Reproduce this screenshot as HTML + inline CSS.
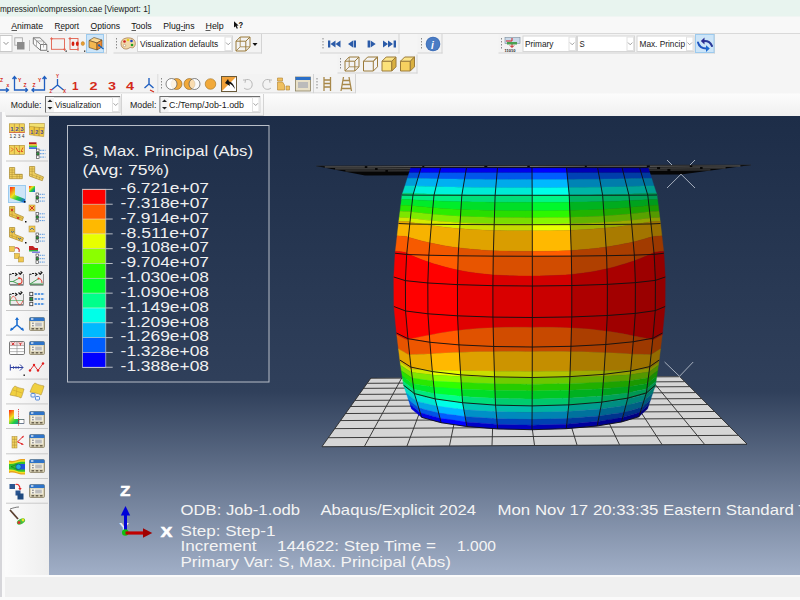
<!DOCTYPE html>
<html><head><meta charset="utf-8"><style>
html,body{margin:0;padding:0;width:800px;height:600px;overflow:hidden;background:#f4f4f4}
svg{position:absolute;left:0;top:0;display:block}
text{font-family:"Liberation Sans", sans-serif}
</style></head><body>
<svg width="800" height="600" viewBox="0 0 800 600">
<rect x="0" y="0" width="800" height="16.7" fill="#e8f4ef"/>
<text x="0" y="11.8" font-size="9.4" fill="#1a1a1a" textLength="150" lengthAdjust="spacingAndGlyphs" >mpression\compression.cae [Viewport: 1]</text>
<rect x="0" y="16.7" width="800" height="16.8" fill="#f8f8f8"/>
<text x="11.25" y="28.5" font-size="9.1" fill="#111" textLength="31.75" lengthAdjust="spacingAndGlyphs" >Animate</text>
<text x="54.5" y="28.5" font-size="9.1" fill="#111" textLength="24.5" lengthAdjust="spacingAndGlyphs" >Report</text>
<text x="90.5" y="28.5" font-size="9.1" fill="#111" textLength="29.5" lengthAdjust="spacingAndGlyphs" >Options</text>
<text x="131.25" y="28.5" font-size="9.1" fill="#111" textLength="20.5" lengthAdjust="spacingAndGlyphs" >Tools</text>
<text x="163.25" y="28.5" font-size="9.1" fill="#111" textLength="31.25" lengthAdjust="spacingAndGlyphs" >Plug-ins</text>
<text x="205.5" y="28.5" font-size="9.1" fill="#111" textLength="18.25" lengthAdjust="spacingAndGlyphs" >Help</text>
<path d="M11.5 30.5h5.5 M58.5 30.5h4 M90.5 30.5h6 M131.5 30.5h4.5 M181 30.5h4 M205.5 30.5h5" stroke="#333" stroke-width="0.8"/>
<path d="M234 21.3 L234 27.6 L235.5 26.3 L236.8 28.8 L237.9 28.3 L236.7 25.8 L238.6 25.6Z" fill="#111"/>
<text x="238.6" y="28.2" font-size="8.6" fill="#111" textLength="4.6" lengthAdjust="spacingAndGlyphs" font-weight="bold">?</text>
<rect x="0" y="33" width="800" height="1" fill="#d9d9d9"/>
<rect x="0" y="34" width="800" height="82" fill="#f5f5f5"/>
<rect x="0" y="34" width="107" height="19.5" fill="#f3f3f3"/><rect x="106" y="34" width="1" height="19.5" fill="#d4d4d4"/><rect x="0" y="52.5" width="107" height="1" fill="#d4d4d4"/>
<rect x="0" y="35.5" width="12" height="16" fill="#fff" stroke="#c8c8c8" stroke-width="1"/>
<path d="M3.5 42 L6 44.5 L8.5 42" fill="none" stroke="#777" stroke-width="0.8"/>
<rect x="14.8" y="37.8" width="7.6" height="7.4" fill="#f6f6f6" stroke="#a8a8a8" stroke-width="0.9"/>
<rect x="17" y="42" width="7.5" height="7.5" fill="#8a8a8a"/>
<rect x="29" y="40" width="1" height="11" fill="#c4c4c4"/>
<path d="M33.3 37.8 H40 L46.8 44.5 V50.3 H40.5 L33.3 44Z M33.3 37.8 L40.5 44.5 H46.8 M40.5 44.5 V50.3" fill="#fafafa" stroke="#6e6e6e" stroke-width="0.9"/>
<path d="M36.5 41 H43.5 V47.5 M36.5 41 V46" fill="none" stroke="#9a9a9a" stroke-width="0.7"/>
<rect x="47.3" y="50.8" width="1.2" height="1.2" fill="#333"/>
<rect x="51.5" y="38.8" width="13" height="10.5" fill="none" stroke="#e2604e" stroke-width="0.9"/>
<path d="M50 38.8h3 M51.5 37.3v3 M63 49.3h3 M64.5 47.8v3" stroke="#e2604e" stroke-width="0.9"/>
<rect x="65.5" y="50.5" width="1.3" height="1.3" fill="#222"/>
<rect x="70" y="38.5" width="8" height="11" fill="none" stroke="#e2604e" stroke-width="0.9"/>
<path d="M68.5 38.5h3 M70 37v3 M78 48v3" stroke="#e2604e" stroke-width="0.9"/>
<ellipse cx="73" cy="43.8" rx="1.4" ry="2.3" fill="#d42010"/><ellipse cx="77.3" cy="43.8" rx="1.4" ry="2.3" fill="#d42010"/><ellipse cx="82.8" cy="43.6" rx="1.7" ry="2" fill="#e8a030" stroke="#b07020" stroke-width="0.4"/>
<rect x="84" y="50.5" width="1.3" height="1.3" fill="#222"/>
<rect x="86.5" y="34.5" width="17" height="18" fill="#cde5f8" stroke="#9ccaee" stroke-width="1"/>
<path d="M89 40.5 l5 -3 l8 2.5 l-5 3Z" fill="#fbd890" stroke="#5a4020" stroke-width="0.6"/><path d="M89 40.5 l8 2.5 v7 l-8 -2.5Z" fill="#f4b850" stroke="#5a4020" stroke-width="0.6"/><path d="M97 43 l5 -3 v7 l-5 3Z" fill="#f08a30" stroke="#5a4020" stroke-width="0.6"/>
<path d="M99 45.5 L103.5 49" stroke="#1060c0" stroke-width="1.2"/><circle cx="99" cy="45.3" r="1.1" fill="#1060c0"/>
<rect x="113.5" y="34" width="148.5" height="19.5" fill="#f3f3f3"/><rect x="261" y="34" width="1" height="19.5" fill="#d4d4d4"/><rect x="113.5" y="52.5" width="148.5" height="1" fill="#d4d4d4"/>
<rect x="116" y="38" width="1" height="1.5" fill="#8a8a8a"/><rect x="116" y="41" width="1" height="1.5" fill="#8a8a8a"/><rect x="116" y="44" width="1" height="1.5" fill="#8a8a8a"/><rect x="116" y="47" width="1" height="1.5" fill="#8a8a8a"/>
<path d="M121 43.5 C121 38 128 37 132 38.5 C136 40 136 45 134 47 C132 49 131 46.5 129 48 C127 50 121 49.5 121 43.5Z" fill="#f0d8a8" stroke="#a07040" stroke-width="0.7"/>
<circle cx="124.5" cy="41.5" r="1.3" fill="#d02020"/><circle cx="128" cy="40" r="1.3" fill="#e8d020"/><circle cx="131.5" cy="41" r="1.3" fill="#2040c0"/><circle cx="132" cy="45" r="1.3" fill="#20a020"/><circle cx="124.5" cy="45.5" r="1.2" fill="#fff" stroke="#a07040" stroke-width="0.5"/>
<rect x="137.5" y="36.0" width="95" height="15.5" fill="#fff" stroke="#d6d6d6" stroke-width="1"/><rect x="225" y="37.0" width="6.5" height="13.5" fill="#fff" stroke="#e2e2e2" stroke-width="1"/><path d="M226 42.55 L228.2 44.75 L230.4 42.55" fill="none" stroke="#8a8a8a" stroke-width="0.8"/><text x="140" y="47.2" font-size="9.2" fill="#1a1a1a" textLength="78.2" lengthAdjust="spacingAndGlyphs" >Visualization defaults</text>
<path d="M236 41.2 h9.8 v9.8 h-9.8Z M236 41.2 l4.2 -4.2 h9.8 l-4.2 4.2 M245.8 41.2 l4.2 -4.2 v9.8 l-4.2 4.2" fill="none" stroke="#9a7a3a" stroke-width="1"/><path d="M240.2 37 v9.8 l-4.2 4.2 M240.2 46.8 h9.8" fill="none" stroke="#9a7a3a" stroke-width="0.8"/>
<path d="M252.5 43 h5 l-2.5 3Z" fill="#111"/>
<rect x="320" y="34" width="79.5" height="19.5" fill="#f3f3f3"/><rect x="398.5" y="34" width="1" height="19.5" fill="#d4d4d4"/><rect x="320" y="52.5" width="79.5" height="1" fill="#d4d4d4"/>
<rect x="322.5" y="38" width="1" height="1.5" fill="#8a8a8a"/><rect x="322.5" y="41" width="1" height="1.5" fill="#8a8a8a"/><rect x="322.5" y="44" width="1" height="1.5" fill="#8a8a8a"/><rect x="322.5" y="47" width="1" height="1.5" fill="#8a8a8a"/>
<path d="M328 40.5 h2.3 v7 h-2.3Z M335.5 40.5 v7 l-5 -3.5Z M340.5 40.5 v7 l-5 -3.5Z" fill="#2b5ba8"/>
<path d="M353 40.5 v7 l-5 -3.5Z M353.6 40.5 h2.4 v7 h-2.4Z" fill="#2b5ba8"/>
<path d="M367.6 40.5 h2.4 v7 h-2.4Z M370.6 40.5 v7 l5.1 -3.5Z" fill="#2b5ba8"/>
<path d="M383 40.5 v7 l5 -3.5Z M388 40.5 v7 l5 -3.5Z M393.6 40.5 h2.4 v7 h-2.4Z" fill="#2b5ba8"/>
<rect x="417.5" y="34" width="25.0" height="19.5" fill="#f3f3f3"/><rect x="441.5" y="34" width="1" height="19.5" fill="#d4d4d4"/><rect x="417.5" y="52.5" width="25.0" height="1" fill="#d4d4d4"/>
<rect x="421" y="38" width="1" height="1.5" fill="#8a8a8a"/><rect x="421" y="41" width="1" height="1.5" fill="#8a8a8a"/><rect x="421" y="44" width="1" height="1.5" fill="#8a8a8a"/><rect x="421" y="47" width="1" height="1.5" fill="#8a8a8a"/>
<circle cx="433" cy="44" r="7.3" fill="#3f6fb8"/><circle cx="433" cy="44" r="6.5" fill="#4a7cc4"/>
<text x="431" y="48.5" font-size="10" fill="#fff" font-weight="bold" font-style="italic" font-family='Liberation Serif'>i</text>
<rect x="498.5" y="34" width="216.5" height="19.5" fill="#f3f3f3"/><rect x="714" y="34" width="1" height="19.5" fill="#d4d4d4"/><rect x="498.5" y="52.5" width="216.5" height="1" fill="#d4d4d4"/>
<rect x="501" y="38" width="1" height="1.5" fill="#8a8a8a"/><rect x="501" y="41" width="1" height="1.5" fill="#8a8a8a"/><rect x="501" y="44" width="1" height="1.5" fill="#8a8a8a"/><rect x="501" y="47" width="1" height="1.5" fill="#8a8a8a"/>
<rect x="505" y="37.5" width="15" height="6" fill="#c8d8e8" stroke="#7a8a9a" stroke-width="0.6"/><path d="M506 41 h6 v-3" stroke="#d02020" stroke-width="1" fill="none"/><path d="M512 42 v5 M510 45.5 l2 2 l2 -2" stroke="#c01010" stroke-width="1" fill="none"/><rect x="507" y="42" width="10" height="2.5" fill="#4aa050"/>
<text x="504.5" y="52.3" font-size="4" fill="#222" font-weight="bold">11010</text>
<rect x="523.0" y="36.0" width="53.5" height="15.5" fill="#fff" stroke="#d6d6d6" stroke-width="1"/><rect x="569" y="37.0" width="6.5" height="13.5" fill="#fff" stroke="#e2e2e2" stroke-width="1"/><path d="M570 42.55 L572.2 44.75 L574.4 42.55" fill="none" stroke="#8a8a8a" stroke-width="0.8"/><text x="525.0" y="47.2" font-size="9.2" fill="#1a1a1a" textLength="28.5" lengthAdjust="spacingAndGlyphs" >Primary</text>
<rect x="577.5" y="36.0" width="57" height="15.5" fill="#fff" stroke="#d6d6d6" stroke-width="1"/><rect x="627" y="37.0" width="6.5" height="13.5" fill="#fff" stroke="#e2e2e2" stroke-width="1"/><path d="M628 42.55 L630.2 44.75 L632.4 42.55" fill="none" stroke="#8a8a8a" stroke-width="0.8"/><text x="579.5" y="47.2" font-size="9.2" fill="#1a1a1a" textLength="5.2" lengthAdjust="spacingAndGlyphs" >S</text>
<rect x="637.0" y="36.0" width="57.0" height="15.5" fill="#fff" stroke="#d6d6d6" stroke-width="1"/><rect x="686.5" y="37.0" width="6.5" height="13.5" fill="#fff" stroke="#e2e2e2" stroke-width="1"/><path d="M687.5 42.55 L689.7 44.75 L691.9 42.55" fill="none" stroke="#8a8a8a" stroke-width="0.8"/><text x="639.5" y="47.2" font-size="9.2" fill="#1a1a1a" textLength="45.5" lengthAdjust="spacingAndGlyphs" >Max. Princip</text>
<rect x="695.5" y="34.5" width="18.5" height="18" fill="#cde5f8" stroke="#9ccaee" stroke-width="1"/>
<path d="M703.5 41.2 Q709.5 40.5 712 46" stroke="#2a3a9a" stroke-width="2" fill="none" stroke-linecap="round"/>
<path d="M700.8 41 L704.5 37.6 L704.5 44.4Z" fill="#2a2a90"/>
<path d="M698 42.5 Q699.5 48.3 706.5 48.6" stroke="#1f55c0" stroke-width="2" fill="none" stroke-linecap="round"/>
<path d="M709.8 48.6 L706 45.3 L706 51.9Z" fill="#1a68d0"/>
<rect x="337.5" y="54.5" width="80.0" height="19.0" fill="#f3f3f3"/><rect x="416.5" y="54.5" width="1" height="19.0" fill="#d4d4d4"/><rect x="337.5" y="72.5" width="80.0" height="1" fill="#d4d4d4"/>
<rect x="340" y="58" width="1" height="1.5" fill="#8a8a8a"/><rect x="340" y="61" width="1" height="1.5" fill="#8a8a8a"/><rect x="340" y="64" width="1" height="1.5" fill="#8a8a8a"/><rect x="340" y="67" width="1" height="1.5" fill="#8a8a8a"/>
<path d="M345 61.2 h9.8 v9.8 h-9.8Z M345 61.2 l4.2 -4.2 h9.8 l-4.2 4.2 M354.8 61.2 l4.2 -4.2 v9.8 l-4.2 4.2" fill="none" stroke="#9a7a3a" stroke-width="1"/><path d="M349.2 57 v9.8 l-4.2 4.2 M349.2 66.8 h9.8" fill="none" stroke="#9a7a3a" stroke-width="0.8"/>
<path d="M363.5 61.2 h9.8 v9.8 h-9.8Z M363.5 61.2 l4.2 -4.2 h9.8 l-4.2 4.2 M373.3 61.2 l4.2 -4.2 v9.8 l-4.2 4.2" fill="none" stroke="#9a7a3a" stroke-width="1"/>
<path d="M382 61.2 h9.8 v9.8 h-9.8Z" fill="#fbe27a" stroke="#9a7a3a" stroke-width="1"/><path d="M382 61.2 l4.2 -4.2 h9.8 l-4.2 4.2Z" fill="#fbe48a" stroke="#9a7a3a" stroke-width="1"/><path d="M391.8 61.2 l4.2 -4.2 v9.8 l-4.2 4.2Z" fill="#d9b040" stroke="#9a7a3a" stroke-width="1"/>
<path d="M400.5 61.2 h9.8 v9.8 h-9.8Z" fill="#f6d060" stroke="#9a7a3a" stroke-width="1"/><path d="M400.5 61.2 l4.2 -4.2 h9.8 l-4.2 4.2Z" fill="#fbe48a" stroke="#9a7a3a" stroke-width="1"/><path d="M410.3 61.2 l4.2 -4.2 v9.8 l-4.2 4.2Z" fill="#d9b040" stroke="#9a7a3a" stroke-width="1"/>
<rect x="0" y="74" width="158.5" height="19.5" fill="#f3f3f3"/><rect x="157.5" y="74" width="1" height="19.5" fill="#d4d4d4"/><rect x="0" y="92.5" width="158.5" height="1" fill="#d4d4d4"/>
<path d="M-1 90 h9 M6 88 l2.5 2 l-2.5 2" stroke="#1f5fc0" stroke-width="1.3" fill="none"/>
<text x="0" y="81.5" font-size="5" fill="#d42a1a" font-weight="bold">Z</text>
<text x="6.5" y="86.5" font-size="5" fill="#d42a1a" font-weight="bold">x</text>
<path d="M14.5 77 v13 h13 M12.5 79 l2 -2.5 l2 2.5 M25.5 88 l2 2 l-2 2" stroke="#1f5fc0" stroke-width="1.3" fill="none"/>
<text x="18" y="81.5" font-size="5" fill="#d42a1a" font-weight="bold">Y</text>
<text x="23.5" y="87" font-size="5" fill="#d42a1a" font-weight="bold">Z</text>
<path d="M44.5 77 v13 h-13 M42.5 79 l2 -2.5 l2 2.5 M34 88 l-2 2 l2 2" stroke="#1f5fc0" stroke-width="1.3" fill="none"/>
<text x="38" y="81.5" font-size="5" fill="#d42a1a" font-weight="bold">Y</text>
<text x="32.5" y="87" font-size="5" fill="#d42a1a" font-weight="bold">Z</text>
<path d="M57.5 79 v6 l-6 5 M57.5 85 l6 5" stroke="#1f5fc0" stroke-width="1.3" fill="none"/>
<text x="56" y="78" font-size="4.5" fill="#d42a1a" font-weight="bold">Y</text>
<text x="49.5" y="92.5" font-size="4.5" fill="#d42a1a" font-weight="bold">Z</text>
<text x="63" y="92.5" font-size="4.5" fill="#d42a1a" font-weight="bold">X</text>
<text x="72" y="89.5" font-size="11" fill="#d42a1a" textLength="6.5" lengthAdjust="spacingAndGlyphs" font-weight="bold">1</text>
<text x="89.5" y="89.5" font-size="11" fill="#d42a1a" textLength="8" lengthAdjust="spacingAndGlyphs" font-weight="bold">2</text>
<text x="108" y="89.5" font-size="11" fill="#d42a1a" textLength="8" lengthAdjust="spacingAndGlyphs" font-weight="bold">3</text>
<text x="126" y="89.5" font-size="11" fill="#d42a1a" textLength="8" lengthAdjust="spacingAndGlyphs" font-weight="bold">4</text>
<path d="M149 78 v6 l-4.5 4 M149 84 l4.5 4" stroke="#1f5fc0" stroke-width="1.4" fill="none"/>
<path d="M150 90 l4 2" stroke="#d42a1a" stroke-width="1.2"/>
<rect x="158.5" y="74" width="155.5" height="19.5" fill="#f3f3f3"/><rect x="313" y="74" width="1" height="19.5" fill="#d4d4d4"/><rect x="158.5" y="92.5" width="155.5" height="1" fill="#d4d4d4"/>
<rect x="161" y="78" width="1" height="1.5" fill="#8a8a8a"/><rect x="161" y="81" width="1" height="1.5" fill="#8a8a8a"/><rect x="161" y="84" width="1" height="1.5" fill="#8a8a8a"/><rect x="161" y="87" width="1" height="1.5" fill="#8a8a8a"/>
<circle cx="176.5" cy="84" r="5.5" fill="#f1a93a" stroke="#8a6020" stroke-width="0.6"/><circle cx="171.5" cy="84" r="5.5" fill="#fff" fill-opacity="0.85" stroke="#555" stroke-width="0.7"/>
<circle cx="189.5" cy="84" r="5.5" fill="#f1a93a" stroke="#8a6020" stroke-width="0.6"/><circle cx="194.5" cy="84" r="5.5" fill="#fff" fill-opacity="0.6" stroke="#555" stroke-width="0.7"/>
<circle cx="210.5" cy="84" r="5.3" fill="#f1a93a" stroke="#a07020" stroke-width="0.6"/>
<rect x="221.5" y="76.5" width="15" height="15" fill="#fff" stroke="#6a5a3a" stroke-width="1"/><path d="M222 77 h14 L222 91Z" fill="#f0a038"/>
<path d="M225 83 l3 -4 l1 2.5 C232 82 234 85 235 89 C233 86 231 84 229.5 83.5 l0.5 2.5Z" fill="#111"/>
<path d="M245 80 C250 78 253 82 252 86 C251 90 246 90 244 88 M243 80 l2.5 0 l-0.5 2.8" stroke="#b8b8b8" stroke-width="1" fill="none"/>
<path d="M270 80 C265 78 262 82 263 86 C264 90 269 90 271 88 M272 80 l-2.5 0 l0.5 2.8" stroke="#b8b8b8" stroke-width="1" fill="none"/>
<path d="M277.5 78 h5 v3 h-5Z M277.5 82 h5 l2 3 v5 h-7Z M286 86 h3.5 v4 h-3.5Z" fill="#f0c060" stroke="#b08030" stroke-width="0.6"/>
<rect x="295.5" y="77" width="15" height="14" fill="#e8e0c8" stroke="#8a8060" stroke-width="0.8"/><rect x="295.5" y="77" width="15" height="3" fill="#2a6fc8"/><rect x="298" y="82" width="10" height="6" fill="#bbb"/>
<rect x="314" y="74" width="42" height="19.5" fill="#f3f3f3"/><rect x="355" y="74" width="1" height="19.5" fill="#d4d4d4"/><rect x="314" y="92.5" width="42" height="1" fill="#d4d4d4"/>
<rect x="316.5" y="78" width="1" height="1.5" fill="#8a8a8a"/><rect x="316.5" y="81" width="1" height="1.5" fill="#8a8a8a"/><rect x="316.5" y="84" width="1" height="1.5" fill="#8a8a8a"/><rect x="316.5" y="87" width="1" height="1.5" fill="#8a8a8a"/>
<path d="M324 77 v14 M330.5 77 v14 M324 80 h6.5 M324 83.5 h6.5 M324 87 h6.5" stroke="#a8884a" stroke-width="1.3" fill="none"/>
<path d="M343.5 77 L341 91 M349 77 L351.5 91 M342.8 80.5 h6.5 M342 84.5 h8.5 M341.5 88.5 h9.5" stroke="#a8884a" stroke-width="1.3" fill="none"/>
<defs><linearGradient id="modbg" x1="0" y1="0" x2="0" y2="1"><stop offset="0" stop-color="#fcfcfc"/><stop offset="1" stop-color="#f0f0f0"/></linearGradient></defs>
<rect x="0" y="93.5" width="800" height="22.5" fill="url(#modbg)"/>
<rect x="6" y="94" width="116" height="22" fill="url(#modbg)"/><rect x="121" y="94" width="1" height="22" fill="#d4d4d4"/><rect x="6" y="115" width="116" height="1" fill="#d4d4d4"/>
<text x="10.8" y="108" font-size="8.8" fill="#1a1a1a" textLength="30.7" lengthAdjust="spacingAndGlyphs" >Module:</text>
<rect x="45.5" y="96.5" width="74.5" height="16" fill="#fff" stroke="#d4d4d4" stroke-width="1"/><path d="M45.6 112.5 V96.6 H120.0" fill="none" stroke="#6e6e6e" stroke-width="1.2"/><rect x="46" y="97" width="8" height="15" fill="#f4f4f4"/><path d="M47.5 102 L50 99.5 L52.5 102Z" fill="#222"/><path d="M47.5 107 L50 109.5 L52.5 107Z" fill="#222"/><rect x="112.5" y="97.5" width="6.5" height="14" fill="#fff" stroke="#e2e2e2" stroke-width="1"/><path d="M113.5 103.3 L115.7 105.5 L117.9 103.3" fill="none" stroke="#8a8a8a" stroke-width="0.8"/><text x="55" y="108.2" font-size="9.2" fill="#1a1a1a" textLength="46" lengthAdjust="spacingAndGlyphs" >Visualization</text>
<rect x="122" y="94" width="142" height="22" fill="url(#modbg)"/><rect x="263" y="94" width="1" height="22" fill="#d4d4d4"/><rect x="122" y="115" width="142" height="1" fill="#d4d4d4"/>
<text x="130" y="108" font-size="8.8" fill="#1a1a1a" textLength="26.4" lengthAdjust="spacingAndGlyphs" >Model:</text>
<rect x="160.0" y="96.5" width="100.0" height="16" fill="#fff" stroke="#d4d4d4" stroke-width="1"/><path d="M160.1 112.5 V96.6 H260.0" fill="none" stroke="#6e6e6e" stroke-width="1.2"/><rect x="160.5" y="97" width="8" height="15" fill="#f4f4f4"/><path d="M162.0 102 L164.5 99.5 L167.0 102Z" fill="#222"/><path d="M162.0 107 L164.5 109.5 L167.0 107Z" fill="#222"/><rect x="252.5" y="97.5" width="6.5" height="14" fill="#fff" stroke="#e2e2e2" stroke-width="1"/><path d="M253.5 103.3 L255.7 105.5 L257.9 103.3" fill="none" stroke="#8a8a8a" stroke-width="0.8"/><text x="169" y="108.2" font-size="9.2" fill="#1a1a1a" textLength="75" lengthAdjust="spacingAndGlyphs" >C:/Temp/Job-1.odb</text>
<defs><linearGradient id="ltbg" x1="0" y1="0" x2="1" y2="0"><stop offset="0" stop-color="#fdfdfd"/><stop offset="1" stop-color="#eeeeee"/></linearGradient></defs>
<rect x="0" y="116" width="49" height="459" fill="url(#ltbg)"/>
<rect x="0" y="112" width="2" height="488" fill="#d6d6da"/>
<rect x="2" y="112" width="3" height="488" fill="#fafafa"/>
<rect x="6" y="116" width="42" height="1" fill="#c8c8c8"/>
<rect x="6" y="160.5" width="42" height="1" fill="#c9c9c9"/>
<rect x="6" y="265" width="42" height="1" fill="#c9c9c9"/>
<rect x="6" y="310" width="42" height="1" fill="#c9c9c9"/>
<rect x="6" y="334.6" width="42" height="1" fill="#c9c9c9"/>
<rect x="6" y="378.6" width="42" height="1" fill="#c9c9c9"/>
<rect x="6" y="403.4" width="42" height="1" fill="#c9c9c9"/>
<rect x="6" y="428" width="42" height="1" fill="#c9c9c9"/>
<rect x="6" y="453.3" width="42" height="1" fill="#c9c9c9"/>
<rect x="6" y="478" width="42" height="1" fill="#c9c9c9"/>
<rect x="6" y="502.7" width="42" height="1" fill="#c9c9c9"/>
<rect x="9.3" y="123.8" width="15.2" height="8.5" fill="#f2d45a" stroke="#a88830" stroke-width="0.6"/>
<path d="M14.4 123.8 v8.5 M19.4 123.8 v8.5" stroke="#a88830" stroke-width="0.6"/>
<text x="10.2" y="130.8" font-size="6.2" fill="#4a4a9a" font-weight="bold">1</text>
<text x="15.2" y="130.8" font-size="6.2" fill="#4a4a9a" font-weight="bold">2</text>
<text x="20.2" y="130.8" font-size="6.2" fill="#4a4a9a" font-weight="bold">3</text>
<path d="M9 132.4 h16" stroke="#e04030" stroke-width="0.6"/>
<text x="9.5" y="138" font-size="4.6" fill="#333" textLength="15" lengthAdjust="spacingAndGlyphs">1 2 3 4</text>
<rect x="29.3" y="123.3" width="15" height="4.5" fill="#f2e070" stroke="#a88830" stroke-width="0.5"/>
<path d="M29.5 126.5 l4.8 0.3 l-0.3 8.5 l-4.5 -0.5Z M34.3 127 l5 0.4 l-0.4 8.6 l-4.6 -0.4Z M39.3 127.5 l5 0.4 l-0.6 8.7 l-4.6 -0.5Z" fill="#f0c840" stroke="#a88830" stroke-width="0.5"/>
<text x="30.2" y="133.5" font-size="5.5" fill="#4a4a9a" font-weight="bold">1</text>
<text x="35.2" y="133.5" font-size="5.5" fill="#4a4a9a" font-weight="bold">2</text>
<text x="40.2" y="133.5" font-size="5.5" fill="#4a4a9a" font-weight="bold">3</text>
<rect x="9.3" y="145.3" width="15.2" height="9" fill="#f2d45a" stroke="#a88830" stroke-width="0.6"/>
<path d="M14.4 145.3 v9 M19.4 145.3 v9" stroke="#a88830" stroke-width="0.6"/>
<path d="M11 147.5 l2 2 l-2 2 M16 147.5 l2 4 h2 M23 147.5 l-2 4 h2" stroke="#e05020" stroke-width="0.9" fill="none"/>
<path d="M29 142.3 h7.5 v1.8 h-7.5Z" fill="#b02020"/><path d="M29 144.1 h8 v1.6 h-8Z" fill="#f0b020"/><path d="M29 145.7 h8 v1.6 h-8Z" fill="#50d030"/><path d="M29 147.3 h8 v1.6 h-8Z" fill="#3060e0"/>
<rect x="36.5" y="149.00" width="2.6" height="2.6" fill="#fff" stroke="#333" stroke-width="0.6"/><path d="M40 150.30 h5.5" stroke="#4a90e0" stroke-width="0.9" stroke-dasharray="1.6 0.8"/><rect x="36.5" y="152.40" width="2.6" height="2.6" fill="#2a9a3a" stroke="#333" stroke-width="0.6"/><path d="M40 153.70 h5.5" stroke="#4a90e0" stroke-width="0.9" stroke-dasharray="1.6 0.8"/><rect x="36.5" y="155.80" width="2.6" height="2.6" fill="#fff" stroke="#333" stroke-width="0.6"/><path d="M40 157.10 h5.5" stroke="#4a90e0" stroke-width="0.9" stroke-dasharray="1.6 0.8"/>
<path d="M9.5 167.5 h5.2 v6.8 h7.6 v4.4 h-12.8Z" fill="#f0d060" stroke="#a88830" stroke-width="0.7"/><path d="M12.1 167.5 v11.2 M9.5 170 h5.2 M9.5 172.3 h5.2 M9.5 174.5 h12.8 M9.5 176.6 h12.8 M17 174.3 v4.4 M19.6 174.3 v4.4" stroke="#a88830" stroke-width="0.45"/>
<path d="M29.5 166.5 h5.2 v6.8 l8.8 3.6 l-1.2 3.8 l-12.8 -4.6Z" fill="#f0d060" stroke="#a88830" stroke-width="0.7"/><path d="M32.1 166.5 v10.5 M29.5 169 h5.2 M29.5 171.3 h5.2 M29.5 174 l13.5 4.6 M37 175 l-1 3.8 M40 176.3 l-1 3.8" stroke="#a88830" stroke-width="0.45"/>
<rect x="8.5" y="185.5" width="17" height="17" fill="#cde5f8" stroke="#9ccaee" stroke-width="1"/>
<defs><linearGradient id="rb1" x1="0" y1="0" x2="1" y2="1"><stop offset="0" stop-color="#ff2010"/><stop offset="0.35" stop-color="#f0e020"/><stop offset="0.6" stop-color="#20d040"/><stop offset="1" stop-color="#2050ff"/></linearGradient></defs><path d="M10 187 h5 v8 l10 4 v4 l-15 -5Z" fill="url(#rb1)"/>
<rect x="24" y="201" width="1.5" height="1.5" fill="#111"/>
<defs><linearGradient id="rb2" x1="0" y1="0" x2="1" y2="1"><stop offset="0" stop-color="#ff2010"/><stop offset="0.35" stop-color="#f0e020"/><stop offset="0.6" stop-color="#20d040"/><stop offset="1" stop-color="#2050ff"/></linearGradient></defs><path d="M29 186 h6 v6 h-6Z" fill="url(#rb2)"/>
<rect x="36.0" y="193.00" width="2.6" height="2.6" fill="#fff" stroke="#333" stroke-width="0.6"/><path d="M39.5 194.30 h5.5" stroke="#4a90e0" stroke-width="0.9" stroke-dasharray="1.6 0.8"/><rect x="36.0" y="196.40" width="2.6" height="2.6" fill="#2a9a3a" stroke="#333" stroke-width="0.6"/><path d="M39.5 197.70 h5.5" stroke="#4a90e0" stroke-width="0.9" stroke-dasharray="1.6 0.8"/><rect x="36.0" y="199.80" width="2.6" height="2.6" fill="#fff" stroke="#333" stroke-width="0.6"/><path d="M39.5 201.10 h5.5" stroke="#4a90e0" stroke-width="0.9" stroke-dasharray="1.6 0.8"/>
<path d="M9.5 206.5 h5.2 v6.8 l8.8 3.6 l-1.2 3.8 l-12.8 -4.6Z" fill="#f0c850" stroke="#a88830" stroke-width="0.7"/><path d="M12.1 206.5 v10.5 M9.5 209 h5.2 M9.5 211.3 h5.2 M9.5 214 l13.5 4.6 M17 215 l-1 3.8 M20 216.3 l-1 3.8" stroke="#a88830" stroke-width="0.45"/>
<path d="M11 209 l2 2 M13 209 l-2 2 M17 217 l2 2 M19 217 l-2 2" stroke="#d02020" stroke-width="0.8"/>
<rect x="25" y="221" width="1.5" height="1.5" fill="#111"/>
<rect x="29" y="205" width="6" height="6" fill="#f0c850" stroke="#a88830" stroke-width="0.5"/><path d="M30 206 l4 4 M34 206 l-4 4" stroke="#d02020" stroke-width="0.9"/>
<rect x="36.0" y="212.50" width="2.6" height="2.6" fill="#fff" stroke="#333" stroke-width="0.6"/><path d="M39.5 213.80 h5.5" stroke="#4a90e0" stroke-width="0.9" stroke-dasharray="1.6 0.8"/><rect x="36.0" y="215.90" width="2.6" height="2.6" fill="#2a9a3a" stroke="#333" stroke-width="0.6"/><path d="M39.5 217.20 h5.5" stroke="#4a90e0" stroke-width="0.9" stroke-dasharray="1.6 0.8"/><rect x="36.0" y="219.30" width="2.6" height="2.6" fill="#fff" stroke="#333" stroke-width="0.6"/><path d="M39.5 220.60 h5.5" stroke="#4a90e0" stroke-width="0.9" stroke-dasharray="1.6 0.8"/>
<path d="M9.5 227.5 h5.2 v6.8 l8.8 3.6 l-1.2 3.8 l-12.8 -4.6Z" fill="#f0c850" stroke="#a88830" stroke-width="0.7"/><path d="M12.1 227.5 v10.5 M9.5 230 h5.2 M9.5 232.3 h5.2 M9.5 235 l13.5 4.6 M17 236 l-1 3.8 M20 237.3 l-1 3.8" stroke="#a88830" stroke-width="0.45"/>
<path d="M11 231 l1.5 1.5 l1.5 -1.5 M18 238 l1.5 1.5 l1.5 -1.5" stroke="#2060c0" stroke-width="0.8" fill="none"/>
<rect x="25" y="242" width="1.5" height="1.5" fill="#111"/>
<rect x="29" y="226" width="6" height="6" fill="#f0c850" stroke="#a88830" stroke-width="0.5"/><path d="M30 230 l2 -2 l2 2" stroke="#2060c0" stroke-width="0.8" fill="none"/>
<rect x="36.0" y="233.00" width="2.6" height="2.6" fill="#fff" stroke="#333" stroke-width="0.6"/><path d="M39.5 234.30 h5.5" stroke="#4a90e0" stroke-width="0.9" stroke-dasharray="1.6 0.8"/><rect x="36.0" y="236.40" width="2.6" height="2.6" fill="#2a9a3a" stroke="#333" stroke-width="0.6"/><path d="M39.5 237.70 h5.5" stroke="#4a90e0" stroke-width="0.9" stroke-dasharray="1.6 0.8"/><rect x="36.0" y="239.80" width="2.6" height="2.6" fill="#fff" stroke="#333" stroke-width="0.6"/><path d="M39.5 241.10 h5.5" stroke="#4a90e0" stroke-width="0.9" stroke-dasharray="1.6 0.8"/>
<rect x="9.5" y="246.5" width="5" height="5" fill="#f0c850" stroke="#a88830" stroke-width="0.5"/><rect x="14.5" y="253.5" width="5" height="5" fill="#f0c850" stroke="#a88830" stroke-width="0.5"/><rect x="18.5" y="257" width="5" height="5" fill="#f0c850" stroke="#a88830" stroke-width="0.5"/>
<path d="M15 248 C18 247 20 249 19 252" stroke="#d02020" stroke-width="1.1" fill="none"/>
<path d="M29 246 h4 l2 2 h3 v2 h-9Z" fill="#c02020"/><path d="M29 250 h9 v1.5 h-9Z" fill="#30b040"/><path d="M32 251.5 h8 v1.5 h-8Z" fill="#8080e0"/>
<rect x="36.0" y="254.00" width="2.6" height="2.6" fill="#fff" stroke="#333" stroke-width="0.6"/><path d="M39.5 255.30 h5.5" stroke="#4a90e0" stroke-width="0.9" stroke-dasharray="1.6 0.8"/><rect x="36.0" y="257.40" width="2.6" height="2.6" fill="#2a9a3a" stroke="#333" stroke-width="0.6"/><path d="M39.5 258.70 h5.5" stroke="#4a90e0" stroke-width="0.9" stroke-dasharray="1.6 0.8"/><rect x="36.0" y="260.80" width="2.6" height="2.6" fill="#fff" stroke="#333" stroke-width="0.6"/><path d="M39.5 262.10 h5.5" stroke="#4a90e0" stroke-width="0.9" stroke-dasharray="1.6 0.8"/>
<path d="M9.5 274 V284.5 H23.5 V274" fill="#ececec" stroke="#8a8a8a" stroke-width="0.9"/><path d="M10 285.2 H23.5" stroke="#555" stroke-width="0.8"/><path d="M9.5 274.2 h2 M12 273.5 h2.2 M15.2 273 l1.8 1.5 l-1.8 1.2 M18.5 272.5 l2 2 M20.5 271.5 l1.5 1 l-2 2" stroke="#1a1a1a" stroke-width="1.1" fill="none"/>
<path d="M29.5 274 V284.5 H43.5 V274" fill="#ececec" stroke="#8a8a8a" stroke-width="0.9"/><path d="M30 285.2 H43.5" stroke="#555" stroke-width="0.8"/><path d="M29.5 274.2 h2 M32 273.5 h2.2 M35.2 273 l1.8 1.5 l-1.8 1.2 M38.5 272.5 l2 2 M40.5 271.5 l1.5 1 l-2 2" stroke="#1a1a1a" stroke-width="1.1" fill="none"/>
<path d="M10 281.5 H13 L18.5 278.5 M13 281.5 L18.5 284" stroke="#3a9a4a" stroke-width="0.9" fill="none"/>
<path d="M19 278 C23 277.5 23 284.5 19 284" stroke="#e04030" stroke-width="1.1" fill="none"/><circle cx="19" cy="278.2" r="1" fill="#e04030"/><circle cx="19" cy="284" r="1" fill="#e04030"/>
<path d="M30 284 L38 279 M30 284 H43" stroke="#3a9a4a" stroke-width="0.9" fill="none"/><path d="M38 279 C40 278 42 280 42 283" stroke="#e04030" stroke-width="1" fill="none"/><circle cx="38.5" cy="278.6" r="1" fill="#e04030"/>
<path d="M9.5 294 V304.5 H23.5 V294" fill="#ececec" stroke="#8a8a8a" stroke-width="0.9"/><path d="M10 305.2 H23.5" stroke="#555" stroke-width="0.8"/><path d="M9.5 294.2 h2 M12 293.5 h2.2 M15.2 293 l1.8 1.5 l-1.8 1.2 M18.5 292.5 l2 2 M20.5 291.5 l1.5 1 l-2 2" stroke="#1a1a1a" stroke-width="1.1" fill="none"/>
<path d="M10 300.5 C12.5 295 14.5 295 16.5 300.5 C18.5 306 21 306 23 300.5" stroke="#e05040" stroke-width="0.9" fill="none"/><path d="M10 300.5 h13 M10.5 296 v9" stroke="#40a050" stroke-width="0.6"/>
<rect x="29.8" y="292.3" width="3" height="3.4" fill="#fff" stroke="#333" stroke-width="0.8"/>
<path d="M34.5 294 h10" stroke="#2a7ee0" stroke-width="1.3" stroke-dasharray="2.4 0.9"/>
<rect x="29.8" y="297.3" width="3" height="3.4" fill="#2a9a3a" stroke="#333" stroke-width="0.8"/>
<path d="M34.5 299 h10" stroke="#2a7ee0" stroke-width="1.3" stroke-dasharray="2.4 0.9"/>
<rect x="29.8" y="302.3" width="3" height="3.4" fill="#fff" stroke="#333" stroke-width="0.8"/>
<path d="M34.5 304 h10" stroke="#2a7ee0" stroke-width="1.3" stroke-dasharray="2.4 0.9"/>
<path d="M17 318 v7 l-6 5 M17 325 l6 5" stroke="#1f6fd0" stroke-width="1.6" fill="none"/><path d="M15 320 l2 -3 l2 3Z M10 331 l1 -3.5 l2.5 2Z M24 331 l-1 -3.5 l-2.5 2Z" fill="#1f6fd0"/>
<rect x="29.5" y="317.5" width="15" height="13" rx="1.2" fill="#d9d1b4" stroke="#8a8266" stroke-width="0.8"/><path d="M29.5 321 V318.7 Q29.5 317.5 30.7 317.5 H43.3 Q44.5 317.5 44.5 318.7 V321Z" fill="#2f74c8"/><rect x="31" y="318.4" width="2.4" height="1.2" fill="#fff"/><rect x="31" y="321.8" width="11.8" height="5.4" fill="#f4f0e4"/><rect x="32" y="322.6" width="1.8" height="1.4" fill="#999"/><rect x="32" y="325" width="1.8" height="1.4" fill="#999"/><rect x="35.2" y="322.6" width="6.6" height="3.8" fill="#bdbdbd"/><rect x="31.5" y="328" width="2.6" height="1.5" fill="#6a6250"/><rect x="35.7" y="328" width="2.6" height="1.5" fill="#6a6250"/><rect x="39.9" y="328" width="2.6" height="1.5" fill="#6a6250"/>
<rect x="9.5" y="341.5" width="15" height="13" rx="1.2" fill="#fff" stroke="#555" stroke-width="0.8"/><rect x="10" y="342" width="14" height="3.6" fill="#f2d8d8"/><path d="M9.5 345.6 h15 M9.5 348.6 h15 M9.5 351.6 h15 M17 341.5 v13" stroke="#888" stroke-width="0.6"/>
<path d="M11.8 342.6 l2.6 2.6 M14.4 342.6 l-2.6 2.6 M19 342.6 l1.4 1.4 l1.4 -1.4 M20.4 344 v1.6" stroke="#d02020" stroke-width="0.9" fill="none"/>
<rect x="29.5" y="341.5" width="15" height="13" rx="1.2" fill="#d9d1b4" stroke="#8a8266" stroke-width="0.8"/><path d="M29.5 345 V342.7 Q29.5 341.5 30.7 341.5 H43.3 Q44.5 341.5 44.5 342.7 V345Z" fill="#2f74c8"/><rect x="31" y="342.4" width="2.4" height="1.2" fill="#fff"/><rect x="31" y="345.8" width="11.8" height="5.4" fill="#f4f0e4"/><rect x="32" y="346.6" width="1.8" height="1.4" fill="#999"/><rect x="32" y="349" width="1.8" height="1.4" fill="#999"/><rect x="35.2" y="346.6" width="6.6" height="3.8" fill="#bdbdbd"/><rect x="31.5" y="352" width="2.6" height="1.5" fill="#6a6250"/><rect x="35.7" y="352" width="2.6" height="1.5" fill="#6a6250"/><rect x="39.9" y="352" width="2.6" height="1.5" fill="#6a6250"/>
<path d="M10 367.5 h13 M10.3 364.5 v6 M20 364.5 l3 3 l-3 3" stroke="#3040a0" stroke-width="1" fill="none"/><path d="M13.5 366 v3 M16 366 v3 M18.3 366 v3" stroke="#3040a0" stroke-width="0.7"/><rect x="23.5" y="374.5" width="1.4" height="1.4" fill="#111"/>
<path d="M30 370.5 L34 365 L38 370.5 L43 363.5" stroke="#e02020" stroke-width="0.9" fill="none"/><circle cx="30" cy="370.5" r="1.2" fill="#e02020"/><circle cx="34" cy="365" r="1.2" fill="#e02020"/><circle cx="38" cy="370.5" r="1.2" fill="#e02020"/><circle cx="43" cy="363.5" r="1.2" fill="#e02020"/>
<path d="M10 395 C12 390 13 387 15 386 C18 388 20 388 24 389 C23 393 22 396 21 398 C18 396 14 396 10 395Z" fill="#f0d040" stroke="#b09030" stroke-width="0.6"/><path d="M13 390 L22 393 M17 387.5 L16 396" stroke="#c8a030" stroke-width="0.5"/>
<path d="M30 392 C32 387 33 384 35 383 C38 385 40 385 44 386 C43 390 42 393 41 395 C38 393 34 393 30 392Z" fill="#f0d040" stroke="#b09030" stroke-width="0.6"/><rect x="31" y="393.5" width="4" height="3.5" rx="0.8" fill="#eaf2fc" stroke="#3070d0" stroke-width="0.8"/><rect x="35.5" y="396.5" width="4" height="3.5" rx="0.8" fill="#eaf2fc" stroke="#3070d0" stroke-width="0.8"/>
<defs><linearGradient id="rb3" x1="0" y1="0" x2="1" y2="1"><stop offset="0" stop-color="#ff2010"/><stop offset="0.35" stop-color="#f0e020"/><stop offset="0.6" stop-color="#20d040"/><stop offset="1" stop-color="#2050ff"/></linearGradient></defs><path d="M9 410 h5 v9 h10 v5 h-15Z" fill="url(#rb3)"/>
<rect x="19" y="419.5" width="5" height="4" fill="#fff" stroke="#555" stroke-width="0.6"/><path d="M18.5 409 v17" stroke="#d02020" stroke-width="0.8" stroke-dasharray="1.2 1"/>
<rect x="29.5" y="411.5" width="15" height="13" rx="1.2" fill="#d9d1b4" stroke="#8a8266" stroke-width="0.8"/><path d="M29.5 415 V412.7 Q29.5 411.5 30.7 411.5 H43.3 Q44.5 411.5 44.5 412.7 V415Z" fill="#2f74c8"/><rect x="31" y="412.4" width="2.4" height="1.2" fill="#fff"/><rect x="31" y="415.8" width="11.8" height="5.4" fill="#f4f0e4"/><rect x="32" y="416.6" width="1.8" height="1.4" fill="#999"/><rect x="32" y="419" width="1.8" height="1.4" fill="#999"/><rect x="35.2" y="416.6" width="6.6" height="3.8" fill="#bdbdbd"/><rect x="31.5" y="422" width="2.6" height="1.5" fill="#6a6250"/><rect x="35.7" y="422" width="2.6" height="1.5" fill="#6a6250"/><rect x="39.9" y="422" width="2.6" height="1.5" fill="#6a6250"/>
<rect x="12" y="436.5" width="5" height="11.5" fill="#f0d060" stroke="#a88830" stroke-width="0.5"/><path d="M14.5 436.5 v11.5 M12 439.4 h5 M12 442.2 h5 M12 445.1 h5" stroke="#a88830" stroke-width="0.45"/>
<path d="M17.5 442 L23 436.5 M17.5 442 L22.5 444" stroke="#e02020" stroke-width="1"/><path d="M21.5 437 l2.5 -1.5 l-1 2.5Z M21.5 443 l2.5 1.5 l-2.7 0.5Z" fill="#e02020"/>
<rect x="29.5" y="434.5" width="15" height="13" rx="1.2" fill="#d9d1b4" stroke="#8a8266" stroke-width="0.8"/><path d="M29.5 438 V435.7 Q29.5 434.5 30.7 434.5 H43.3 Q44.5 434.5 44.5 435.7 V438Z" fill="#2f74c8"/><rect x="31" y="435.4" width="2.4" height="1.2" fill="#fff"/><rect x="31" y="438.8" width="11.8" height="5.4" fill="#f4f0e4"/><rect x="32" y="439.6" width="1.8" height="1.4" fill="#999"/><rect x="32" y="442" width="1.8" height="1.4" fill="#999"/><rect x="35.2" y="439.6" width="6.6" height="3.8" fill="#bdbdbd"/><rect x="31.5" y="445" width="2.6" height="1.5" fill="#6a6250"/><rect x="35.7" y="445" width="2.6" height="1.5" fill="#6a6250"/><rect x="39.9" y="445" width="2.6" height="1.5" fill="#6a6250"/>
<path d="M9 460.5 C14 462 17 459.5 21 459 H25 V474.5 H21 C17 474 14 471.5 9 473Z" fill="#e8a020"/>
<path d="M9 462 C14 463.5 17 460.5 21 460.3 H25 V473.2 H21 C17 473 14 470 9 471.5Z" fill="#f0e020"/>
<path d="M9 464 C14 464.5 17 462 21 461.8 H25 V471.8 H21 C17 471.5 14 469 9 469.5Z" fill="#30c030"/>
<path d="M18 464 H25 V469.5 H18Z" fill="#2050e0"/><path d="M11 466.7 C14 466 16 464 18 464 M11 466.7 C14 467.5 16 469.5 18 469.5" stroke="#1a6a1a" stroke-width="0.6" fill="none"/>
<circle cx="18.5" cy="466.8" r="2.7" fill="#20b0e0" stroke="#1a3a80" stroke-width="0.6"/>
<rect x="29.5" y="459.5" width="15" height="13" rx="1.2" fill="#d9d1b4" stroke="#8a8266" stroke-width="0.8"/><path d="M29.5 463 V460.7 Q29.5 459.5 30.7 459.5 H43.3 Q44.5 459.5 44.5 460.7 V463Z" fill="#2f74c8"/><rect x="31" y="460.4" width="2.4" height="1.2" fill="#fff"/><rect x="31" y="463.8" width="11.8" height="5.4" fill="#f4f0e4"/><rect x="32" y="464.6" width="1.8" height="1.4" fill="#999"/><rect x="32" y="467" width="1.8" height="1.4" fill="#999"/><rect x="35.2" y="464.6" width="6.6" height="3.8" fill="#bdbdbd"/><rect x="31.5" y="470" width="2.6" height="1.5" fill="#6a6250"/><rect x="35.7" y="470" width="2.6" height="1.5" fill="#6a6250"/><rect x="39.9" y="470" width="2.6" height="1.5" fill="#6a6250"/>
<rect x="9.5" y="484" width="5.5" height="5" fill="#2a5590"/><rect x="15.5" y="490.5" width="5" height="5" fill="#2a5590"/><rect x="17.5" y="493.5" width="6" height="6" fill="#1f4a80"/><path d="M15.5 484.5 C18 483.5 20 485.5 20 489" stroke="#e02020" stroke-width="1.1" fill="none"/><path d="M18.3 488 l1.7 2.5 l1.7 -2.5Z" fill="#e02020"/>
<rect x="29.5" y="484.5" width="15" height="13" rx="1.2" fill="#d9d1b4" stroke="#8a8266" stroke-width="0.8"/><path d="M29.5 488 V485.7 Q29.5 484.5 30.7 484.5 H43.3 Q44.5 484.5 44.5 485.7 V488Z" fill="#2f74c8"/><rect x="31" y="485.4" width="2.4" height="1.2" fill="#fff"/><rect x="31" y="488.8" width="11.8" height="5.4" fill="#f4f0e4"/><rect x="32" y="489.6" width="1.8" height="1.4" fill="#999"/><rect x="32" y="492" width="1.8" height="1.4" fill="#999"/><rect x="35.2" y="489.6" width="6.6" height="3.8" fill="#bdbdbd"/><rect x="31.5" y="495" width="2.6" height="1.5" fill="#6a6250"/><rect x="35.7" y="495" width="2.6" height="1.5" fill="#6a6250"/><rect x="39.9" y="495" width="2.6" height="1.5" fill="#6a6250"/>
<path d="M10 510 L18 519" stroke="#5a4030" stroke-width="1.8"/><path d="M10 509 C13 508 16 507 19 507" stroke="#222" stroke-width="0.6" fill="none"/><ellipse cx="21" cy="521.5" rx="4.5" ry="2.5" transform="rotate(-30 21 521.5)" fill="#40c040"/><circle cx="19" cy="522.5" r="1.5" fill="#e03030"/><circle cx="23" cy="520" r="1.4" fill="#f0e020"/>
<rect x="5" y="575" width="795" height="22" fill="#f0f0f0"/>
<rect x="5" y="575" width="795" height="2" fill="#fbfbfb"/>
<rect x="0" y="597" width="800" height="3" fill="#fafafa"/>
<defs><linearGradient id="vpbg" x1="0" y1="116" x2="0" y2="575" gradientUnits="userSpaceOnUse"><stop offset="0" stop-color="#1d2d48"/><stop offset="0.6" stop-color="#30405b"/><stop offset="1" stop-color="#a1afc7"/></linearGradient></defs>
<rect x="49" y="116" width="751" height="459" fill="url(#vpbg)"/>
<rect x="67.5" y="125.5" width="201.5" height="256.5" fill="none" stroke="#b8bec8" stroke-width="1"/>
<text x="82.5" y="155.7" font-size="14.6" fill="#f0f0f0" textLength="170.5" lengthAdjust="spacingAndGlyphs">S, Max. Principal (Abs)</text>
<text x="82.5" y="174.5" font-size="14.6" fill="#f0f0f0" textLength="86.5" lengthAdjust="spacingAndGlyphs">(Avg: 75%)</text>
<rect x="82.8" y="189.40" width="22.9" height="14.87" fill="#ff0000"/>
<rect x="82.8" y="204.22" width="22.9" height="14.87" fill="#ff5d00"/>
<rect x="82.8" y="219.04" width="22.9" height="14.87" fill="#ffb900"/>
<rect x="82.8" y="233.86" width="22.9" height="14.87" fill="#e8ff00"/>
<rect x="82.8" y="248.68" width="22.9" height="14.87" fill="#8bff00"/>
<rect x="82.8" y="263.50" width="22.9" height="14.87" fill="#2eff00"/>
<rect x="82.8" y="278.32" width="22.9" height="14.87" fill="#00ff2e"/>
<rect x="82.8" y="293.14" width="22.9" height="14.87" fill="#00ff8b"/>
<rect x="82.8" y="307.96" width="22.9" height="14.87" fill="#00ffe8"/>
<rect x="82.8" y="322.78" width="22.9" height="14.87" fill="#00b9ff"/>
<rect x="82.8" y="337.60" width="22.9" height="14.87" fill="#005dff"/>
<rect x="82.8" y="352.42" width="22.9" height="14.87" fill="#0000ff"/>
<rect x="82.6" y="189.20000000000002" width="23.2" height="178.24" fill="none" stroke="#e0e0e0" stroke-width="0.7" opacity="0.85"/>
<rect x="82.8" y="189.05" width="22.9" height="0.7" fill="#f0e8e0" opacity="0.8"/>
<rect x="105.7" y="188.90" width="7" height="1" fill="#b8bcc4"/>
<text x="120.6" y="193.20" font-size="14.6" fill="#f0f0f0" textLength="88.4" lengthAdjust="spacingAndGlyphs">-6.721e+07</text>
<rect x="82.8" y="203.87" width="22.9" height="0.7" fill="#f0e8e0" opacity="0.8"/>
<rect x="105.7" y="203.72" width="7" height="1" fill="#b8bcc4"/>
<text x="120.6" y="208.02" font-size="14.6" fill="#f0f0f0" textLength="88.4" lengthAdjust="spacingAndGlyphs">-7.318e+07</text>
<rect x="82.8" y="218.69" width="22.9" height="0.7" fill="#f0e8e0" opacity="0.8"/>
<rect x="105.7" y="218.54" width="7" height="1" fill="#b8bcc4"/>
<text x="120.6" y="222.84" font-size="14.6" fill="#f0f0f0" textLength="88.4" lengthAdjust="spacingAndGlyphs">-7.914e+07</text>
<rect x="82.8" y="233.51" width="22.9" height="0.7" fill="#f0e8e0" opacity="0.8"/>
<rect x="105.7" y="233.36" width="7" height="1" fill="#b8bcc4"/>
<text x="120.6" y="237.66" font-size="14.6" fill="#f0f0f0" textLength="88.4" lengthAdjust="spacingAndGlyphs">-8.511e+07</text>
<rect x="82.8" y="248.33" width="22.9" height="0.7" fill="#f0e8e0" opacity="0.8"/>
<rect x="105.7" y="248.18" width="7" height="1" fill="#b8bcc4"/>
<text x="120.6" y="252.48" font-size="14.6" fill="#f0f0f0" textLength="88.4" lengthAdjust="spacingAndGlyphs">-9.108e+07</text>
<rect x="82.8" y="263.15" width="22.9" height="0.7" fill="#f0e8e0" opacity="0.8"/>
<rect x="105.7" y="263.00" width="7" height="1" fill="#b8bcc4"/>
<text x="120.6" y="267.30" font-size="14.6" fill="#f0f0f0" textLength="88.4" lengthAdjust="spacingAndGlyphs">-9.704e+07</text>
<rect x="82.8" y="277.97" width="22.9" height="0.7" fill="#f0e8e0" opacity="0.8"/>
<rect x="105.7" y="277.82" width="7" height="1" fill="#b8bcc4"/>
<text x="120.6" y="282.12" font-size="14.6" fill="#f0f0f0" textLength="88.4" lengthAdjust="spacingAndGlyphs">-1.030e+08</text>
<rect x="82.8" y="292.79" width="22.9" height="0.7" fill="#f0e8e0" opacity="0.8"/>
<rect x="105.7" y="292.64" width="7" height="1" fill="#b8bcc4"/>
<text x="120.6" y="296.94" font-size="14.6" fill="#f0f0f0" textLength="88.4" lengthAdjust="spacingAndGlyphs">-1.090e+08</text>
<rect x="82.8" y="307.61" width="22.9" height="0.7" fill="#f0e8e0" opacity="0.8"/>
<rect x="105.7" y="307.46" width="7" height="1" fill="#b8bcc4"/>
<text x="120.6" y="311.76" font-size="14.6" fill="#f0f0f0" textLength="88.4" lengthAdjust="spacingAndGlyphs">-1.149e+08</text>
<rect x="82.8" y="322.43" width="22.9" height="0.7" fill="#f0e8e0" opacity="0.8"/>
<rect x="105.7" y="322.28" width="7" height="1" fill="#b8bcc4"/>
<text x="120.6" y="326.58" font-size="14.6" fill="#f0f0f0" textLength="88.4" lengthAdjust="spacingAndGlyphs">-1.209e+08</text>
<rect x="82.8" y="337.25" width="22.9" height="0.7" fill="#f0e8e0" opacity="0.8"/>
<rect x="105.7" y="337.10" width="7" height="1" fill="#b8bcc4"/>
<text x="120.6" y="341.40" font-size="14.6" fill="#f0f0f0" textLength="88.4" lengthAdjust="spacingAndGlyphs">-1.269e+08</text>
<rect x="82.8" y="352.07" width="22.9" height="0.7" fill="#f0e8e0" opacity="0.8"/>
<rect x="105.7" y="351.92" width="7" height="1" fill="#b8bcc4"/>
<text x="120.6" y="356.22" font-size="14.6" fill="#f0f0f0" textLength="88.4" lengthAdjust="spacingAndGlyphs">-1.328e+08</text>
<rect x="82.8" y="366.89" width="22.9" height="0.7" fill="#f0e8e0" opacity="0.8"/>
<rect x="105.7" y="366.74" width="7" height="1" fill="#b8bcc4"/>
<text x="120.6" y="371.04" font-size="14.6" fill="#f0f0f0" textLength="88.4" lengthAdjust="spacingAndGlyphs">-1.388e+08</text>
<path d="M371.00 377.90 L679.50 376.35 L747.00 444.00 L322.00 446.50Z" fill="#d6d6d6"/>
<path d="M371.00 378.27 L679.50 376.73 M367.34 383.31 L684.54 381.69 M363.48 388.35 L689.87 386.65 M359.38 394.39 L695.51 392.61 M355.02 400.43 L701.51 398.57 M350.39 406.47 L707.89 404.53 M345.46 413.52 L714.68 411.48 M340.19 420.57 L721.94 418.43 M334.56 428.63 L729.70 426.37 M328.51 437.69 L738.04 435.31 M322.00 446.75 L747.00 444.25 M371.00 377.90 L322.00 446.50 M401.85 377.75 L364.50 446.25 M432.70 377.59 L407.00 446.00 M463.55 377.44 L449.50 445.75 M494.40 377.28 L492.00 445.50 M525.25 377.12 L534.50 445.25 M556.10 376.97 L577.00 445.00 M586.95 376.81 L619.50 444.75 M617.80 376.66 L662.00 444.50 M648.65 376.50 L704.50 444.25 M679.50 376.35 L747.00 444.00" stroke="#2a2a2a" stroke-width="0.9" fill="none"/>
<path d="M664.6 362 L679.5 376.3 L693.2 362" stroke="#b4bcc8" stroke-width="0.9" fill="none"/>
<path d="M316.2 166 L751 165 L681 174.4 L365 175.6Z" fill="#060606"/>
<path d="M324.8 166.9 L740.4 165.9" stroke="#6a6a6a" stroke-width="1.2" stroke-dasharray="40 2.5 55 2 60 3"/>
<path d="M335.1 168.9 L725.6 167.9" stroke="#4e4e4e" stroke-width="1.3" stroke-dasharray="40 2.5 55 2 60 3"/>
<path d="M345.4 170.9 L710.9 169.9" stroke="#3a3a3a" stroke-width="1.3" stroke-dasharray="40 2.5 55 2 60 3"/>
<path d="M316.2 166 L751 165" stroke="#262626" stroke-width="0.7"/>
<path d="M667 160 L672 165 M695 160 L690 165 M667 188 L681 174.2 L695 188" stroke="#b4bcc8" stroke-width="0.9" fill="none"/>
<path d="M410.80 167.60 L412.50 167.60 L414.20 167.60 L415.90 167.60 L417.61 167.60 L419.31 167.60 L421.01 167.60 L419.48 172.83 L417.75 172.83 L416.03 172.82 L414.30 172.82 L412.58 172.81 L410.85 172.81 L409.13 172.81Z" fill="#0000d9" stroke="#0000d9" stroke-width="0.35"/>
<path d="M409.13 172.81 L410.85 172.81 L412.58 172.81 L414.30 172.82 L416.03 172.82 L417.75 172.83 L419.48 172.83 L417.87 178.35 L416.13 178.29 L414.38 178.28 L412.63 178.27 L410.88 178.26 L409.13 178.26 L407.38 178.25Z" fill="#004fd9" stroke="#004fd9" stroke-width="0.35"/>
<path d="M407.38 178.25 L409.13 178.26 L410.88 178.26 L412.63 178.27 L414.38 178.28 L416.13 178.29 L417.87 178.35 L415.62 186.03 L413.86 185.95 L412.07 185.93 L410.29 185.92 L408.50 185.90 L406.72 185.89 L404.93 185.88Z" fill="#009dd9" stroke="#009dd9" stroke-width="0.35"/>
<path d="M404.93 185.88 L406.72 185.89 L408.50 185.90 L410.29 185.92 L412.07 185.93 L413.86 185.95 L415.62 186.03 L413.47 193.38 L411.68 193.29 L409.86 193.26 L408.04 193.24 L406.22 193.22 L404.40 193.20 L402.58 193.18Z" fill="#00d9c5" stroke="#00d9c5" stroke-width="0.35"/>
<path d="M402.58 193.18 L404.40 193.20 L406.22 193.22 L408.04 193.24 L409.86 193.26 L411.68 193.29 L413.47 193.38 L412.96 195.12 L411.14 195.10 L409.31 195.08 L407.48 195.06 L405.66 195.04 L403.83 195.02 L402.00 195.00Z" fill="#00d976" stroke="#00d976" stroke-width="0.35"/>
<path d="M402.00 195.00 L403.83 195.02 L405.66 195.04 L407.48 195.06 L409.31 195.08 L411.14 195.10 L412.96 195.12 L412.45 199.76 L410.63 199.64 L408.79 199.60 L406.96 199.57 L405.12 199.54 L403.29 199.51 L401.45 199.48Z" fill="#00e67d" stroke="#00e67d" stroke-width="0.35"/>
<path d="M401.45 199.48 L403.29 199.51 L405.12 199.54 L406.96 199.57 L408.79 199.60 L410.63 199.64 L412.45 199.76 L411.79 205.71 L409.97 205.48 L408.12 205.41 L406.28 205.37 L404.43 205.33 L402.59 205.28 L400.74 205.24Z" fill="#00e629" stroke="#00e629" stroke-width="0.35"/>
<path d="M400.74 205.24 L402.59 205.28 L404.43 205.33 L406.28 205.37 L408.12 205.41 L409.97 205.48 L411.79 205.71 L411.11 211.87 L409.28 211.60 L407.42 211.52 L405.57 211.47 L403.71 211.41 L401.85 211.36 L400.00 211.30Z" fill="#29e600" stroke="#29e600" stroke-width="0.35"/>
<path d="M400.00 211.30 L401.85 211.36 L403.71 211.41 L405.57 211.47 L407.42 211.52 L409.28 211.60 L411.11 211.87 L410.40 218.22 L408.56 217.94 L406.70 217.85 L404.83 217.78 L402.96 217.71 L401.10 217.64 L399.23 217.57Z" fill="#7de600" stroke="#7de600" stroke-width="0.35"/>
<path d="M399.23 217.57 L401.10 217.64 L402.96 217.71 L404.83 217.78 L406.70 217.85 L408.56 217.94 L410.40 218.22 L409.99 222.01 L408.15 221.62 L406.28 221.50 L404.40 221.43 L402.53 221.35 L400.66 221.28 L398.78 221.20Z" fill="#d1e600" stroke="#d1e600" stroke-width="0.35"/>
<path d="M398.78 221.20 L400.66 221.28 L402.53 221.35 L404.40 221.43 L406.28 221.50 L408.15 221.62 L409.99 222.01 L409.77 223.99 L407.89 223.91 L406.01 223.82 L404.13 223.74 L402.26 223.66 L400.38 223.58 L398.50 223.50Z" fill="#e6a600" stroke="#e6a600" stroke-width="0.35"/>
<path d="M398.50 223.50 L400.38 223.58 L402.26 223.66 L404.13 223.74 L406.01 223.82 L407.89 223.91 L409.77 223.99 L408.42 237.20 L406.57 236.55 L404.68 236.36 L402.78 236.22 L400.89 236.09 L398.99 235.96 L397.09 235.83Z" fill="#fab500" stroke="#fab500" stroke-width="0.35"/>
<path d="M397.09 235.83 L398.99 235.96 L400.89 236.09 L402.78 236.22 L404.68 236.36 L406.57 236.55 L408.42 237.20 L406.77 253.39 L404.94 252.31 L403.02 252.01 L401.10 251.82 L399.18 251.62 L397.25 251.43 L395.33 251.23Z" fill="#fa5b00" stroke="#fa5b00" stroke-width="0.35"/>
<path d="M395.33 251.23 L397.25 251.43 L399.18 251.62 L401.10 251.82 L403.02 252.01 L404.94 252.31 L406.77 253.39 L406.66 254.47 L404.73 254.26 L402.81 254.06 L400.88 253.86 L398.95 253.66 L397.03 253.45 L395.10 253.25Z" fill="#fa0000" stroke="#fa0000" stroke-width="0.35"/>
<path d="M395.10 253.25 L397.03 253.45 L398.95 253.66 L400.88 253.86 L402.81 254.06 L404.73 254.26 L406.66 254.47 L405.42 280.65 L403.48 280.04 L401.53 279.43 L399.59 278.83 L397.64 278.22 L395.70 277.61 L393.75 277.00Z" fill="#f70000" stroke="#f70000" stroke-width="0.35"/>
<path d="M393.75 277.00 L395.70 277.61 L397.64 278.22 L399.59 278.83 L401.53 279.43 L403.48 280.04 L405.42 280.65 L405.56 310.96 L403.62 310.22 L401.67 309.48 L399.73 308.73 L397.79 307.99 L395.84 307.24 L393.90 306.50Z" fill="#f50000" stroke="#f50000" stroke-width="0.35"/>
<path d="M393.90 306.50 L395.84 307.24 L397.79 307.99 L399.73 308.73 L401.67 309.48 L403.62 310.22 L405.56 310.96 L407.94 338.68 L406.03 337.73 L404.13 336.79 L402.22 335.84 L400.31 334.89 L398.41 333.95 L396.50 333.00Z" fill="#f20000" stroke="#f20000" stroke-width="0.35"/>
<path d="M396.50 333.00 L398.41 333.95 L400.31 334.89 L402.22 335.84 L404.13 336.79 L406.03 337.73 L407.94 338.68 L408.05 339.69 L406.23 339.55 L404.34 338.68 L402.43 337.72 L400.53 336.76 L398.63 335.79 L396.72 334.83Z" fill="#e60000" stroke="#e60000" stroke-width="0.35"/>
<path d="M396.72 334.83 L398.63 335.79 L400.53 336.76 L402.43 337.72 L404.34 338.68 L406.23 339.55 L408.05 339.69 L409.65 354.78 L407.82 354.18 L405.95 353.15 L404.07 352.07 L402.19 350.98 L400.31 349.90 L398.43 348.81Z" fill="#e65400" stroke="#e65400" stroke-width="0.35"/>
<path d="M398.43 348.81 L400.31 349.90 L402.19 350.98 L404.07 352.07 L405.95 353.15 L407.82 354.18 L409.65 354.78 L410.95 367.10 L409.10 365.92 L407.24 364.73 L405.38 363.55 L403.52 362.37 L401.66 361.18 L399.80 360.00Z" fill="#e6a600" stroke="#e6a600" stroke-width="0.35"/>
<path d="M399.80 360.00 L401.66 361.18 L403.52 362.37 L405.38 363.55 L407.24 364.73 L409.10 365.92 L410.95 367.10 L411.19 368.91 L409.37 368.00 L407.52 366.83 L405.66 365.63 L403.81 364.43 L401.95 363.23 L400.10 362.03Z" fill="#e0a300" stroke="#e0a300" stroke-width="0.35"/>
<path d="M400.10 362.03 L401.95 363.23 L403.81 364.43 L405.66 365.63 L407.52 366.83 L409.37 368.00 L411.19 368.91 L411.63 372.38 L409.81 371.35 L407.96 370.14 L406.11 368.91 L404.27 367.68 L402.42 366.45 L400.57 365.22Z" fill="#cce000" stroke="#cce000" stroke-width="0.35"/>
<path d="M400.57 365.22 L402.42 366.45 L404.27 367.68 L406.11 368.91 L407.96 370.14 L409.81 371.35 L411.63 372.38 L412.37 378.20 L410.56 377.11 L408.73 375.86 L406.89 374.58 L405.06 373.30 L403.22 372.02 L401.38 370.74Z" fill="#7ae000" stroke="#7ae000" stroke-width="0.35"/>
<path d="M401.38 370.74 L403.22 372.02 L405.06 373.30 L406.89 374.58 L408.73 375.86 L410.56 377.11 L412.37 378.20 L413.10 383.84 L411.29 382.69 L409.47 381.38 L407.65 380.06 L405.82 378.73 L404.00 377.41 L402.17 376.08Z" fill="#28e000" stroke="#28e000" stroke-width="0.35"/>
<path d="M402.17 376.08 L404.00 377.41 L405.82 378.73 L407.65 380.06 L409.47 381.38 L411.29 382.69 L413.10 383.84 L413.79 389.29 L411.99 388.00 L410.18 386.64 L408.36 385.27 L406.55 383.90 L404.73 382.53 L402.92 381.15Z" fill="#00e028" stroke="#00e028" stroke-width="0.35"/>
<path d="M402.92 381.15 L404.73 382.53 L406.55 383.90 L408.36 385.27 L410.18 386.64 L411.99 388.00 L413.79 389.29 L414.34 393.54 L412.53 392.13 L410.72 390.73 L408.92 389.32 L407.11 387.91 L405.31 386.51 L403.50 385.10Z" fill="#00e07a" stroke="#00e07a" stroke-width="0.35"/>
<path d="M403.50 385.10 L405.31 386.51 L407.11 387.91 L408.92 389.32 L410.72 390.73 L412.53 392.13 L414.34 393.54 L414.80 395.05 L413.02 393.70 L411.22 392.30 L409.43 390.90 L407.63 389.49 L405.83 388.08 L404.03 386.68Z" fill="#00d976" stroke="#00d976" stroke-width="0.35"/>
<path d="M404.03 386.68 L405.83 388.08 L407.63 389.49 L409.43 390.90 L411.22 392.30 L413.02 393.70 L414.80 395.05 L416.75 401.40 L415.00 400.05 L413.23 398.65 L411.47 397.24 L409.70 395.84 L407.93 394.43 L406.16 393.02Z" fill="#00d9c5" stroke="#00d9c5" stroke-width="0.35"/>
<path d="M406.16 393.02 L407.93 394.43 L409.70 395.84 L411.47 397.24 L413.23 398.65 L415.00 400.05 L416.75 401.40 L418.79 408.05 L417.07 406.68 L415.33 405.28 L413.60 403.87 L411.86 402.46 L410.13 401.06 L408.39 399.65Z" fill="#009dd9" stroke="#009dd9" stroke-width="0.35"/>
<path d="M408.39 399.65 L410.13 401.06 L411.86 402.46 L413.60 403.87 L415.33 405.28 L417.07 406.68 L418.79 408.05 L420.26 412.82 L418.55 411.41 L416.83 410.00 L415.12 408.60 L413.41 407.19 L411.69 405.78 L409.98 404.38Z" fill="#004fd9" stroke="#004fd9" stroke-width="0.35"/>
<path d="M409.98 404.38 L411.69 405.78 L413.41 407.19 L415.12 408.60 L416.83 410.00 L418.55 411.41 L420.26 412.82 L421.65 417.34 L419.96 415.93 L418.27 414.53 L416.57 413.12 L414.88 411.71 L413.19 410.31 L411.50 408.90Z" fill="#0000d9" stroke="#0000d9" stroke-width="0.35"/>
<path d="M421.01 167.60 L424.27 167.60 L427.54 167.60 L430.80 167.60 L434.07 167.60 L437.33 167.60 L440.59 167.60 L439.34 172.84 L436.03 172.84 L432.72 172.84 L429.41 172.84 L426.10 172.83 L422.79 172.83 L419.48 172.83Z" fill="#0000f2" stroke="#0000f2" stroke-width="0.35"/>
<path d="M419.48 172.83 L422.79 172.83 L426.10 172.83 L429.41 172.84 L432.72 172.84 L436.03 172.84 L439.34 172.84 L437.91 178.82 L434.57 178.75 L431.22 178.67 L427.88 178.60 L424.54 178.52 L421.20 178.43 L417.87 178.35Z" fill="#0058f2" stroke="#0058f2" stroke-width="0.35"/>
<path d="M417.87 178.35 L421.20 178.43 L424.54 178.52 L427.88 178.60 L431.22 178.67 L434.57 178.75 L437.91 178.82 L436.03 186.70 L432.62 186.60 L429.22 186.50 L425.81 186.39 L422.41 186.27 L419.02 186.15 L415.62 186.03Z" fill="#00b0f2" stroke="#00b0f2" stroke-width="0.35"/>
<path d="M415.62 186.03 L419.02 186.15 L422.41 186.27 L425.81 186.39 L429.22 186.50 L432.62 186.60 L436.03 186.70 L434.25 194.16 L430.78 194.04 L427.31 193.92 L423.85 193.80 L420.38 193.66 L416.93 193.52 L413.47 193.38Z" fill="#00f2dc" stroke="#00f2dc" stroke-width="0.35"/>
<path d="M413.47 193.38 L416.93 193.52 L420.38 193.66 L423.85 193.80 L427.31 193.92 L430.78 194.04 L434.25 194.16 L434.00 195.20 L430.50 195.19 L426.99 195.17 L423.48 195.16 L419.98 195.15 L416.47 195.13 L412.96 195.12Z" fill="#00f284" stroke="#00f284" stroke-width="0.35"/>
<path d="M412.96 195.12 L416.47 195.13 L419.98 195.15 L423.48 195.16 L426.99 195.17 L430.50 195.19 L434.00 195.20 L433.50 200.81 L429.98 200.65 L426.47 200.49 L422.97 200.32 L419.46 200.14 L415.95 199.96 L412.45 199.76Z" fill="#00eb80" stroke="#00eb80" stroke-width="0.35"/>
<path d="M412.45 199.76 L415.95 199.96 L419.46 200.14 L422.97 200.32 L426.47 200.49 L429.98 200.65 L433.50 200.81 L432.87 207.73 L429.35 207.43 L425.83 207.12 L422.32 206.79 L418.80 206.44 L415.30 206.08 L411.79 205.71Z" fill="#00eb2a" stroke="#00eb2a" stroke-width="0.35"/>
<path d="M411.79 205.71 L415.30 206.08 L418.80 206.44 L422.32 206.79 L425.83 207.12 L429.35 207.43 L432.87 207.73 L432.29 214.20 L428.75 213.85 L425.21 213.49 L421.68 213.11 L418.15 212.72 L414.63 212.30 L411.11 211.87Z" fill="#2aeb00" stroke="#2aeb00" stroke-width="0.35"/>
<path d="M411.11 211.87 L414.63 212.30 L418.15 212.72 L421.68 213.11 L425.21 213.49 L428.75 213.85 L432.29 214.20 L431.71 220.60 L428.15 220.25 L424.59 219.88 L421.04 219.49 L417.49 219.09 L413.95 218.66 L410.40 218.22Z" fill="#80eb00" stroke="#80eb00" stroke-width="0.35"/>
<path d="M410.40 218.22 L413.95 218.66 L417.49 219.09 L421.04 219.49 L424.59 219.88 L428.15 220.25 L431.71 220.60 L431.38 224.30 L427.78 224.24 L424.18 224.19 L420.61 223.82 L417.06 223.24 L413.52 222.64 L409.99 222.01Z" fill="#d5eb00" stroke="#d5eb00" stroke-width="0.35"/>
<path d="M409.99 222.01 L413.52 222.64 L417.06 223.24 L420.61 223.82 L424.18 224.19 L427.78 224.24 L431.38 224.30 L431.38 224.30 L427.78 224.24 L424.18 224.19 L420.57 224.14 L416.97 224.09 L413.37 224.04 L409.77 223.99Z" fill="#ebaa00" stroke="#ebaa00" stroke-width="0.35"/>
<path d="M409.77 223.99 L413.37 224.04 L416.97 224.09 L420.57 224.14 L424.18 224.19 L427.78 224.24 L431.38 224.30 L431.28 225.47 L427.72 224.94 L424.16 224.38 L420.57 224.14 L416.97 224.09 L413.37 224.04 L409.77 223.99Z" fill="#e1f700" stroke="#e1f700" stroke-width="0.35"/>
<path d="M409.77 223.99 L413.37 224.04 L416.97 224.09 L420.57 224.14 L424.16 224.38 L427.72 224.94 L431.28 225.47 L429.85 242.85 L426.26 242.01 L422.67 241.13 L419.09 240.21 L415.53 239.25 L411.97 238.24 L408.42 237.20Z" fill="#f7b300" stroke="#f7b300" stroke-width="0.35"/>
<path d="M408.42 237.20 L411.97 238.24 L415.53 239.25 L419.09 240.21 L422.67 241.13 L426.26 242.01 L429.85 242.85 L428.83 255.24 L425.14 255.11 L421.44 254.98 L417.75 254.85 L414.05 254.72 L410.35 254.60 L406.77 253.39Z" fill="#f75a00" stroke="#f75a00" stroke-width="0.35"/>
<path d="M406.77 253.39 L410.35 254.60 L414.05 254.72 L417.75 254.85 L421.44 254.98 L425.14 255.11 L428.83 255.24 L428.83 255.24 L425.14 255.11 L421.44 254.98 L417.75 254.85 L414.05 254.72 L410.35 254.60 L406.66 254.47Z" fill="#f70000" stroke="#f70000" stroke-width="0.35"/>
<path d="M406.66 254.47 L410.35 254.60 L414.05 254.72 L417.75 254.85 L421.44 254.98 L425.14 255.11 L428.83 255.24 L428.58 262.10 L424.92 260.78 L421.27 259.42 L417.61 258.01 L413.97 256.56 L410.33 255.07 L406.66 254.47Z" fill="#ff5d00" stroke="#ff5d00" stroke-width="0.35"/>
<path d="M406.66 254.47 L410.33 255.07 L413.97 256.56 L417.61 258.01 L421.27 259.42 L424.92 260.78 L428.58 262.10 L427.82 282.96 L424.09 282.58 L420.36 282.19 L416.62 281.81 L412.89 281.42 L409.16 281.04 L405.42 280.65Z" fill="#ff0000" stroke="#ff0000" stroke-width="0.35"/>
<path d="M405.42 280.65 L409.16 281.04 L412.89 281.42 L416.62 281.81 L420.36 282.19 L424.09 282.58 L427.82 282.96 L427.94 313.79 L424.21 313.32 L420.48 312.85 L416.75 312.38 L413.02 311.90 L409.29 311.43 L405.56 310.96Z" fill="#ff0000" stroke="#ff0000" stroke-width="0.35"/>
<path d="M405.56 310.96 L409.29 311.43 L413.02 311.90 L416.75 312.38 L420.48 312.85 L424.21 313.32 L427.94 313.79 L429.40 335.22 L425.81 335.82 L422.23 336.47 L418.66 337.18 L415.10 337.95 L411.55 338.78 L407.94 338.68Z" fill="#ff0000" stroke="#ff0000" stroke-width="0.35"/>
<path d="M407.94 338.68 L411.55 338.78 L415.10 337.95 L418.66 337.18 L422.23 336.47 L425.81 335.82 L429.40 335.22 L429.88 342.28 L426.23 341.68 L422.57 341.08 L418.91 340.48 L415.25 339.88 L411.60 339.28 L407.94 338.68Z" fill="#ff5d00" stroke="#ff5d00" stroke-width="0.35"/>
<path d="M407.94 338.68 L411.60 339.28 L415.25 339.88 L418.91 340.48 L422.57 341.08 L426.23 341.68 L429.88 342.28 L429.88 342.28 L426.23 341.68 L422.57 341.08 L418.91 340.48 L415.25 339.88 L411.60 339.28 L408.05 339.69Z" fill="#ed0000" stroke="#ed0000" stroke-width="0.35"/>
<path d="M408.05 339.69 L411.60 339.28 L415.25 339.88 L418.91 340.48 L422.57 341.08 L426.23 341.68 L429.88 342.28 L430.87 354.01 L427.31 354.06 L423.76 354.13 L420.22 354.24 L416.69 354.39 L413.16 354.57 L409.65 354.78Z" fill="#ed5600" stroke="#ed5600" stroke-width="0.35"/>
<path d="M409.65 354.78 L413.16 354.57 L416.69 354.39 L420.22 354.24 L423.76 354.13 L427.31 354.06 L430.87 354.01 L432.26 370.48 L428.73 370.19 L425.20 369.92 L421.65 369.35 L418.09 368.60 L414.52 367.85 L410.95 367.10Z" fill="#edac00" stroke="#edac00" stroke-width="0.35"/>
<path d="M410.95 367.10 L414.52 367.85 L418.09 368.60 L421.65 369.35 L425.20 369.92 L428.73 370.19 L432.26 370.48 L432.35 371.59 L428.79 370.85 L425.22 370.10 L421.65 369.35 L418.09 368.60 L414.52 367.85 L410.95 367.10Z" fill="#d8ed00" stroke="#d8ed00" stroke-width="0.35"/>
<path d="M410.95 367.10 L414.52 367.85 L418.09 368.60 L421.65 369.35 L425.22 370.10 L428.79 370.85 L432.35 371.59 L432.35 371.59 L428.79 370.85 L425.22 370.10 L421.69 369.65 L418.18 369.38 L414.68 369.14 L411.19 368.91Z" fill="#e8a800" stroke="#e8a800" stroke-width="0.35"/>
<path d="M411.19 368.91 L414.68 369.14 L418.18 369.38 L421.69 369.65 L425.22 370.10 L428.79 370.85 L432.35 371.59 L432.71 375.06 L429.18 374.58 L425.66 374.11 L422.15 373.66 L418.64 373.22 L415.13 372.79 L411.63 372.38Z" fill="#d3e800" stroke="#d3e800" stroke-width="0.35"/>
<path d="M411.63 372.38 L415.13 372.79 L418.64 373.22 L422.15 373.66 L425.66 374.11 L429.18 374.58 L432.71 375.06 L433.32 381.07 L429.82 380.55 L426.32 380.05 L422.83 379.57 L419.34 379.10 L415.85 378.64 L412.37 378.20Z" fill="#7ee800" stroke="#7ee800" stroke-width="0.35"/>
<path d="M412.37 378.20 L415.85 378.64 L419.34 379.10 L422.83 379.57 L426.32 380.05 L429.82 380.55 L433.32 381.07 L433.93 387.13 L430.45 386.55 L426.97 385.99 L423.50 385.43 L420.03 384.89 L416.56 384.36 L413.10 383.84Z" fill="#2ae800" stroke="#2ae800" stroke-width="0.35"/>
<path d="M413.10 383.84 L416.56 384.36 L420.03 384.89 L423.50 385.43 L426.97 385.99 L430.45 386.55 L433.93 387.13 L434.59 393.62 L431.12 392.88 L427.65 392.15 L424.18 391.43 L420.72 390.71 L417.25 389.99 L413.79 389.29Z" fill="#00e82a" stroke="#00e82a" stroke-width="0.35"/>
<path d="M413.79 389.29 L417.25 389.99 L420.72 390.71 L424.18 391.43 L427.65 392.15 L431.12 392.88 L434.59 393.62 L435.13 398.88 L431.66 397.99 L428.20 397.10 L424.73 396.21 L421.27 395.32 L417.80 394.43 L414.34 393.54Z" fill="#00e87e" stroke="#00e87e" stroke-width="0.35"/>
<path d="M414.34 393.54 L417.80 394.43 L421.27 395.32 L424.73 396.21 L428.20 397.10 L431.66 397.99 L435.13 398.88 L435.35 399.78 L431.92 398.98 L428.49 398.18 L425.06 397.39 L421.64 396.60 L418.22 395.82 L414.80 395.05Z" fill="#00e67d" stroke="#00e67d" stroke-width="0.35"/>
<path d="M414.80 395.05 L418.22 395.82 L421.64 396.60 L425.06 397.39 L428.49 398.18 L431.92 398.98 L435.35 399.78 L436.97 406.21 L433.59 405.40 L430.22 404.59 L426.85 403.79 L423.48 402.99 L420.11 402.19 L416.75 401.40Z" fill="#00e6d1" stroke="#00e6d1" stroke-width="0.35"/>
<path d="M416.75 401.40 L420.11 402.19 L423.48 402.99 L426.85 403.79 L430.22 404.59 L433.59 405.40 L436.97 406.21 L438.68 413.01 L435.36 412.17 L432.04 411.34 L428.73 410.51 L425.41 409.69 L422.10 408.87 L418.79 408.05Z" fill="#00a6e6" stroke="#00a6e6" stroke-width="0.35"/>
<path d="M418.79 408.05 L422.10 408.87 L425.41 409.69 L428.73 410.51 L432.04 411.34 L435.36 412.17 L438.68 413.01 L439.98 418.16 L436.69 417.27 L433.41 416.38 L430.12 415.49 L426.83 414.60 L423.55 413.71 L420.26 412.82Z" fill="#0054e6" stroke="#0054e6" stroke-width="0.35"/>
<path d="M420.26 412.82 L423.55 413.71 L426.83 414.60 L430.12 415.49 L433.41 416.38 L436.69 417.27 L439.98 418.16 L441.12 422.68 L437.87 421.79 L434.63 420.90 L431.38 420.01 L428.14 419.12 L424.89 418.23 L421.65 417.34Z" fill="#0000e6" stroke="#0000e6" stroke-width="0.35"/>
<path d="M440.59 167.60 L444.91 167.60 L449.23 167.60 L453.55 167.60 L457.87 167.60 L462.19 167.60 L466.51 167.60 L465.62 172.85 L461.24 172.85 L456.86 172.85 L452.48 172.85 L448.10 172.85 L443.72 172.85 L439.34 172.84Z" fill="#0000f2" stroke="#0000f2" stroke-width="0.35"/>
<path d="M439.34 172.84 L443.72 172.85 L448.10 172.85 L452.48 172.85 L456.86 172.85 L461.24 172.85 L465.62 172.85 L464.54 179.23 L460.10 179.17 L455.66 179.11 L451.22 179.05 L446.78 178.98 L442.35 178.90 L437.91 178.82Z" fill="#0058f2" stroke="#0058f2" stroke-width="0.35"/>
<path d="M437.91 178.82 L442.35 178.90 L446.78 178.98 L451.22 179.05 L455.66 179.11 L460.10 179.17 L464.54 179.23 L463.18 187.28 L458.65 187.20 L454.12 187.12 L449.59 187.02 L445.07 186.92 L440.55 186.81 L436.03 186.70Z" fill="#00b0f2" stroke="#00b0f2" stroke-width="0.35"/>
<path d="M436.03 186.70 L440.55 186.81 L445.07 186.92 L449.59 187.02 L454.12 187.12 L458.65 187.20 L463.18 187.28 L461.91 194.83 L457.29 194.74 L452.67 194.64 L448.06 194.53 L443.45 194.42 L438.85 194.29 L434.25 194.16Z" fill="#00f2dc" stroke="#00f2dc" stroke-width="0.35"/>
<path d="M434.25 194.16 L438.85 194.29 L443.45 194.42 L448.06 194.53 L452.67 194.64 L457.29 194.74 L461.91 194.83 L461.84 195.25 L457.20 195.25 L452.56 195.24 L447.92 195.23 L443.28 195.22 L438.64 195.21 L434.00 195.20Z" fill="#00f284" stroke="#00f284" stroke-width="0.35"/>
<path d="M434.00 195.20 L438.64 195.21 L443.28 195.22 L447.92 195.23 L452.56 195.24 L457.20 195.25 L461.84 195.25 L461.43 201.71 L456.77 201.59 L452.11 201.46 L447.45 201.32 L442.80 201.16 L438.15 200.99 L433.50 200.81Z" fill="#00ed81" stroke="#00ed81" stroke-width="0.35"/>
<path d="M433.50 200.81 L438.15 200.99 L442.80 201.16 L447.45 201.32 L452.11 201.46 L456.77 201.59 L461.43 201.71 L460.93 209.49 L456.25 209.26 L451.56 209.00 L446.88 208.72 L442.21 208.41 L437.54 208.08 L432.87 207.73Z" fill="#00ed2b" stroke="#00ed2b" stroke-width="0.35"/>
<path d="M432.87 207.73 L437.54 208.08 L442.21 208.41 L446.88 208.72 L451.56 209.00 L456.25 209.26 L460.93 209.49 L460.51 216.21 L455.79 215.95 L451.08 215.65 L446.38 215.33 L441.68 214.98 L436.98 214.60 L432.29 214.20Z" fill="#2bed00" stroke="#2bed00" stroke-width="0.35"/>
<path d="M432.29 214.20 L436.98 214.60 L441.68 214.98 L446.38 215.33 L451.08 215.65 L455.79 215.95 L460.51 216.21 L460.10 222.65 L455.35 222.38 L450.62 222.08 L445.88 221.75 L441.16 221.39 L436.43 221.01 L431.71 220.60Z" fill="#81ed00" stroke="#81ed00" stroke-width="0.35"/>
<path d="M431.71 220.60 L436.43 221.01 L441.16 221.39 L445.88 221.75 L450.62 222.08 L455.35 222.38 L460.10 222.65 L459.98 224.52 L455.21 224.48 L450.45 224.44 L445.68 224.41 L440.91 224.37 L436.15 224.33 L431.38 224.30Z" fill="#d8ed00" stroke="#d8ed00" stroke-width="0.35"/>
<path d="M431.38 224.30 L436.15 224.33 L440.91 224.37 L445.68 224.41 L450.45 224.44 L455.21 224.48 L459.98 224.52 L459.74 228.61 L454.98 228.19 L450.23 227.73 L445.48 227.23 L440.74 226.69 L436.01 226.10 L431.28 225.47Z" fill="#daf000" stroke="#daf000" stroke-width="0.35"/>
<path d="M431.28 225.47 L436.01 226.10 L440.74 226.69 L445.48 227.23 L450.23 227.73 L454.98 228.19 L459.74 228.61 L458.63 247.81 L453.81 247.15 L449.00 246.42 L444.20 245.63 L439.40 244.77 L434.62 243.85 L429.85 242.85Z" fill="#f0ae00" stroke="#f0ae00" stroke-width="0.35"/>
<path d="M429.85 242.85 L434.62 243.85 L439.40 244.77 L444.20 245.63 L449.00 246.42 L453.81 247.15 L458.63 247.81 L458.17 255.79 L453.28 255.70 L448.39 255.61 L443.50 255.52 L438.61 255.42 L433.72 255.33 L428.83 255.24Z" fill="#f05700" stroke="#f05700" stroke-width="0.35"/>
<path d="M428.83 255.24 L433.72 255.33 L438.61 255.42 L443.50 255.52 L448.39 255.61 L453.28 255.70 L458.17 255.79 L457.82 270.05 L452.93 268.95 L448.05 267.76 L443.17 266.48 L438.30 265.11 L433.44 263.65 L428.58 262.10Z" fill="#ff5d00" stroke="#ff5d00" stroke-width="0.35"/>
<path d="M428.58 262.10 L433.44 263.65 L438.30 265.11 L443.17 266.48 L448.05 267.76 L452.93 268.95 L457.82 270.05 L457.46 284.63 L452.52 284.35 L447.58 284.07 L442.64 283.80 L437.70 283.52 L432.76 283.24 L427.82 282.96Z" fill="#ff0000" stroke="#ff0000" stroke-width="0.35"/>
<path d="M427.82 282.96 L432.76 283.24 L437.70 283.52 L442.64 283.80 L447.58 284.07 L452.52 284.35 L457.46 284.63 L457.54 315.82 L452.60 315.48 L447.67 315.14 L442.74 314.81 L437.80 314.47 L432.87 314.13 L427.94 313.79Z" fill="#ff0000" stroke="#ff0000" stroke-width="0.35"/>
<path d="M427.94 313.79 L432.87 314.13 L437.80 314.47 L442.74 314.81 L447.67 315.14 L452.60 315.48 L457.54 315.82 L458.23 330.50 L453.40 331.04 L448.57 331.68 L443.75 332.41 L438.95 333.25 L434.17 334.18 L429.40 335.22Z" fill="#ff0000" stroke="#ff0000" stroke-width="0.35"/>
<path d="M429.40 335.22 L434.17 334.18 L438.95 333.25 L443.75 332.41 L448.57 331.68 L453.40 331.04 L458.23 330.50 L458.92 344.87 L454.08 344.43 L449.24 344.00 L444.40 343.57 L439.56 343.14 L434.72 342.71 L429.88 342.28Z" fill="#ff5d00" stroke="#ff5d00" stroke-width="0.35"/>
<path d="M429.88 342.28 L434.72 342.71 L439.56 343.14 L444.40 343.57 L449.24 344.00 L454.08 344.43 L458.92 344.87 L459.36 352.51 L454.59 352.61 L449.83 352.77 L445.07 352.99 L440.33 353.27 L435.59 353.61 L430.87 354.01Z" fill="#ff5d00" stroke="#ff5d00" stroke-width="0.35"/>
<path d="M430.87 354.01 L435.59 353.61 L440.33 353.27 L445.07 352.99 L449.83 352.77 L454.59 352.61 L459.36 352.51 L460.44 370.91 L455.73 370.75 L451.02 370.62 L446.32 370.52 L441.63 370.47 L436.94 370.46 L432.26 370.48Z" fill="#ffb900" stroke="#ffb900" stroke-width="0.35"/>
<path d="M432.26 370.48 L436.94 370.46 L441.63 370.47 L446.32 370.52 L451.02 370.62 L455.73 370.75 L460.44 370.91 L460.67 374.83 L455.95 374.29 L451.23 373.75 L446.51 373.21 L441.79 372.67 L437.07 372.13 L432.35 371.59Z" fill="#e8ff00" stroke="#e8ff00" stroke-width="0.35"/>
<path d="M432.35 371.59 L437.07 372.13 L441.79 372.67 L446.51 373.21 L451.23 373.75 L455.95 374.29 L460.67 374.83 L460.79 376.61 L456.10 376.29 L451.41 376.00 L446.73 375.73 L442.05 375.48 L437.37 375.26 L432.71 375.06Z" fill="#e8ff00" stroke="#e8ff00" stroke-width="0.35"/>
<path d="M432.71 375.06 L437.37 375.26 L442.05 375.48 L446.73 375.73 L451.41 376.00 L456.10 376.29 L460.79 376.61 L461.23 382.75 L456.56 382.41 L451.90 382.09 L447.25 381.80 L442.60 381.53 L437.95 381.28 L433.32 381.07Z" fill="#8bff00" stroke="#8bff00" stroke-width="0.35"/>
<path d="M433.32 381.07 L437.95 381.28 L442.60 381.53 L447.25 381.80 L451.90 382.09 L456.56 382.41 L461.23 382.75 L461.68 389.16 L457.04 388.77 L452.41 388.40 L447.78 388.05 L443.16 387.72 L438.54 387.41 L433.93 387.13Z" fill="#2eff00" stroke="#2eff00" stroke-width="0.35"/>
<path d="M433.93 387.13 L438.54 387.41 L443.16 387.72 L447.78 388.05 L452.41 388.40 L457.04 388.77 L461.68 389.16 L462.20 396.57 L457.59 396.05 L452.99 395.55 L448.38 395.05 L443.78 394.56 L439.19 394.08 L434.59 393.62Z" fill="#00ff2e" stroke="#00ff2e" stroke-width="0.35"/>
<path d="M434.59 393.62 L439.19 394.08 L443.78 394.56 L448.38 395.05 L452.99 395.55 L457.59 396.05 L462.20 396.57 L462.63 402.73 L458.05 402.09 L453.46 401.45 L448.88 400.81 L444.29 400.16 L439.71 399.52 L435.13 398.88Z" fill="#00ff8b" stroke="#00ff8b" stroke-width="0.35"/>
<path d="M435.13 398.88 L439.71 399.52 L444.29 400.16 L448.88 400.81 L453.46 401.45 L458.05 402.09 L462.63 402.73 L462.70 403.10 L458.13 402.52 L453.57 401.96 L449.01 401.40 L444.45 400.85 L439.90 400.31 L435.35 399.78Z" fill="#00ff8b" stroke="#00ff8b" stroke-width="0.35"/>
<path d="M435.35 399.78 L439.90 400.31 L444.45 400.85 L449.01 401.40 L453.57 401.96 L458.13 402.52 L462.70 403.10 L463.86 409.60 L459.37 409.01 L454.88 408.44 L450.40 407.87 L445.92 407.31 L441.44 406.76 L436.97 406.21Z" fill="#00ffe8" stroke="#00ffe8" stroke-width="0.35"/>
<path d="M436.97 406.21 L441.44 406.76 L445.92 407.31 L450.40 407.87 L454.88 408.44 L459.37 409.01 L463.86 409.60 L465.09 416.52 L460.69 415.93 L456.28 415.33 L451.88 414.74 L447.48 414.16 L443.08 413.58 L438.68 413.01Z" fill="#00b9ff" stroke="#00b9ff" stroke-width="0.35"/>
<path d="M438.68 413.01 L443.08 413.58 L447.48 414.16 L451.88 414.74 L456.28 415.33 L460.69 415.93 L465.09 416.52 L466.07 422.01 L461.72 421.37 L457.37 420.72 L453.03 420.08 L448.68 419.44 L444.33 418.80 L439.98 418.16Z" fill="#005dff" stroke="#005dff" stroke-width="0.35"/>
<path d="M439.98 418.16 L444.33 418.80 L448.68 419.44 L453.03 420.08 L457.37 420.72 L461.72 421.37 L466.07 422.01 L466.88 426.53 L462.58 425.89 L458.29 425.25 L454.00 424.61 L449.70 423.96 L445.41 423.32 L441.12 422.68Z" fill="#0000ff" stroke="#0000ff" stroke-width="0.35"/>
<path d="M466.51 167.60 L471.67 167.60 L476.84 167.60 L482.00 167.60 L487.17 167.60 L492.33 167.60 L497.50 167.60 L497.05 172.86 L491.81 172.86 L486.57 172.86 L481.33 172.86 L476.09 172.86 L470.86 172.86 L465.62 172.85Z" fill="#0000eb" stroke="#0000eb" stroke-width="0.35"/>
<path d="M465.62 172.85 L470.86 172.86 L476.09 172.86 L481.33 172.86 L486.57 172.86 L491.81 172.86 L497.05 172.86 L496.48 179.46 L491.15 179.44 L485.83 179.41 L480.50 179.37 L475.18 179.33 L469.86 179.28 L464.54 179.23Z" fill="#0056eb" stroke="#0056eb" stroke-width="0.35"/>
<path d="M464.54 179.23 L469.86 179.28 L475.18 179.33 L480.50 179.37 L485.83 179.41 L491.15 179.44 L496.48 179.46 L495.78 187.61 L490.34 187.58 L484.91 187.53 L479.47 187.48 L474.04 187.42 L468.61 187.36 L463.18 187.28Z" fill="#00aaeb" stroke="#00aaeb" stroke-width="0.35"/>
<path d="M463.18 187.28 L468.61 187.36 L474.04 187.42 L479.47 187.48 L484.91 187.53 L490.34 187.58 L495.78 187.61 L495.13 195.22 L489.59 195.17 L484.05 195.13 L478.51 195.07 L472.97 195.00 L467.44 194.92 L461.91 194.83Z" fill="#00ebd5" stroke="#00ebd5" stroke-width="0.35"/>
<path d="M461.91 194.83 L467.44 194.92 L472.97 195.00 L478.51 195.07 L484.05 195.13 L489.59 195.17 L495.13 195.22 L495.13 195.29 L489.58 195.28 L484.03 195.28 L478.48 195.27 L472.93 195.27 L467.38 195.26 L461.84 195.25Z" fill="#00eb80" stroke="#00eb80" stroke-width="0.35"/>
<path d="M461.84 195.25 L467.38 195.26 L472.93 195.27 L478.48 195.27 L484.03 195.28 L489.58 195.28 L495.13 195.29 L494.90 202.24 L489.32 202.18 L483.74 202.12 L478.16 202.04 L472.58 201.94 L467.00 201.84 L461.43 201.71Z" fill="#00de79" stroke="#00de79" stroke-width="0.35"/>
<path d="M461.43 201.71 L467.00 201.84 L472.58 201.94 L478.16 202.04 L483.74 202.12 L489.32 202.18 L494.90 202.24 L494.64 210.51 L489.01 210.40 L483.39 210.27 L477.77 210.12 L472.15 209.94 L466.54 209.73 L460.93 209.49Z" fill="#00de28" stroke="#00de28" stroke-width="0.35"/>
<path d="M460.93 209.49 L466.54 209.73 L472.15 209.94 L477.77 210.12 L483.39 210.27 L489.01 210.40 L494.64 210.51 L494.42 217.39 L488.76 217.26 L483.10 217.11 L477.45 216.94 L471.79 216.73 L466.15 216.49 L460.51 216.21Z" fill="#28de00" stroke="#28de00" stroke-width="0.35"/>
<path d="M460.51 216.21 L466.15 216.49 L471.79 216.73 L477.45 216.94 L483.10 217.11 L488.76 217.26 L494.42 217.39 L494.21 223.85 L488.52 223.72 L482.83 223.57 L477.14 223.39 L471.45 223.17 L465.77 222.93 L460.10 222.65Z" fill="#79de00" stroke="#79de00" stroke-width="0.35"/>
<path d="M460.10 222.65 L465.77 222.93 L471.45 223.17 L477.14 223.39 L482.83 223.57 L488.52 223.72 L494.21 223.85 L494.18 224.66 L488.48 224.63 L482.78 224.61 L477.08 224.59 L471.38 224.56 L465.68 224.54 L459.98 224.52Z" fill="#cade00" stroke="#cade00" stroke-width="0.35"/>
<path d="M459.98 224.52 L465.68 224.54 L471.38 224.56 L477.08 224.59 L482.78 224.61 L488.48 224.63 L494.18 224.66 L494.01 230.45 L488.29 230.25 L482.57 230.02 L476.86 229.74 L471.15 229.41 L465.44 229.04 L459.74 228.61Z" fill="#cce000" stroke="#cce000" stroke-width="0.35"/>
<path d="M459.74 228.61 L465.44 229.04 L471.15 229.41 L476.86 229.74 L482.57 230.02 L488.29 230.25 L494.01 230.45 L493.42 250.72 L487.61 250.41 L481.80 250.04 L476.00 249.59 L470.20 249.08 L464.41 248.49 L458.63 247.81Z" fill="#e0a300" stroke="#e0a300" stroke-width="0.35"/>
<path d="M458.63 247.81 L464.41 248.49 L470.20 249.08 L476.00 249.59 L481.80 250.04 L487.61 250.41 L493.42 250.72 L493.27 256.14 L487.42 256.08 L481.57 256.02 L475.72 255.97 L469.87 255.91 L464.02 255.85 L458.17 255.79Z" fill="#e05200" stroke="#e05200" stroke-width="0.35"/>
<path d="M458.17 255.79 L464.02 255.85 L469.87 255.91 L475.72 255.97 L481.57 256.02 L487.42 256.08 L493.27 256.14 L493.03 274.91 L487.15 274.37 L481.28 273.73 L475.40 272.98 L469.54 272.13 L463.67 271.15 L457.82 270.05Z" fill="#e85500" stroke="#e85500" stroke-width="0.35"/>
<path d="M457.82 270.05 L463.67 271.15 L469.54 272.13 L475.40 272.98 L481.28 273.73 L487.15 274.37 L493.03 274.91 L492.90 285.67 L486.99 285.49 L481.09 285.32 L475.18 285.15 L469.27 284.97 L463.36 284.80 L457.46 284.63Z" fill="#e80000" stroke="#e80000" stroke-width="0.35"/>
<path d="M457.46 284.63 L463.36 284.80 L469.27 284.97 L475.18 285.15 L481.09 285.32 L486.99 285.49 L492.90 285.67 L492.94 317.09 L487.04 316.88 L481.14 316.67 L475.24 316.46 L469.34 316.25 L463.44 316.03 L457.54 315.82Z" fill="#e80000" stroke="#e80000" stroke-width="0.35"/>
<path d="M457.54 315.82 L463.44 316.03 L469.34 316.25 L475.24 316.46 L481.14 316.67 L487.04 316.88 L492.94 317.09 L493.20 327.80 L487.35 327.98 L481.51 328.25 L475.67 328.63 L469.85 329.13 L464.04 329.75 L458.23 330.50Z" fill="#e00000" stroke="#e00000" stroke-width="0.35"/>
<path d="M458.23 330.50 L464.04 329.75 L469.85 329.13 L475.67 328.63 L481.51 328.25 L487.35 327.98 L493.20 327.80 L493.64 346.48 L487.86 346.21 L482.07 345.94 L476.28 345.67 L470.49 345.40 L464.70 345.14 L458.92 344.87Z" fill="#e05200" stroke="#e05200" stroke-width="0.35"/>
<path d="M458.92 344.87 L464.70 345.14 L470.49 345.40 L476.28 345.67 L482.07 345.94 L487.86 346.21 L493.64 346.48 L493.80 351.71 L488.04 351.68 L482.29 351.71 L476.55 351.80 L470.81 351.96 L465.08 352.20 L459.36 352.51Z" fill="#de5100" stroke="#de5100" stroke-width="0.35"/>
<path d="M459.36 352.51 L465.08 352.20 L470.81 351.96 L476.55 351.80 L482.29 351.71 L488.04 351.68 L493.80 351.71 L494.37 371.26 L488.70 371.10 L483.04 370.97 L477.38 370.89 L471.73 370.85 L466.08 370.85 L460.44 370.91Z" fill="#dea100" stroke="#dea100" stroke-width="0.35"/>
<path d="M460.44 370.91 L466.08 370.85 L471.73 370.85 L477.38 370.89 L483.04 370.97 L488.70 371.10 L494.37 371.26 L494.53 376.85 L488.89 376.52 L483.24 376.18 L477.60 375.84 L471.96 375.51 L466.31 375.17 L460.67 374.83Z" fill="#cade00" stroke="#cade00" stroke-width="0.35"/>
<path d="M460.67 374.83 L466.31 375.17 L471.96 375.51 L477.60 375.84 L483.24 376.18 L488.89 376.52 L494.53 376.85 L494.56 377.63 L488.92 377.39 L483.29 377.18 L477.66 376.99 L472.03 376.83 L466.41 376.71 L460.79 376.61Z" fill="#cade00" stroke="#cade00" stroke-width="0.35"/>
<path d="M460.79 376.61 L466.41 376.71 L472.03 376.83 L477.66 376.99 L483.29 377.18 L488.92 377.39 L494.56 377.63 L494.78 383.85 L489.18 383.60 L483.58 383.37 L477.99 383.17 L472.40 383.00 L466.81 382.86 L461.23 382.75Z" fill="#79de00" stroke="#79de00" stroke-width="0.35"/>
<path d="M461.23 382.75 L466.81 382.86 L472.40 383.00 L477.99 383.17 L483.58 383.37 L489.18 383.60 L494.78 383.85 L495.01 390.47 L489.45 390.19 L483.89 389.94 L478.33 389.70 L472.78 389.49 L467.22 389.31 L461.68 389.16Z" fill="#28de00" stroke="#28de00" stroke-width="0.35"/>
<path d="M461.68 389.16 L467.22 389.31 L472.78 389.49 L478.33 389.70 L483.89 389.94 L489.45 390.19 L495.01 390.47 L495.29 398.44 L489.77 398.10 L484.26 397.77 L478.74 397.45 L473.22 397.14 L467.71 396.85 L462.20 396.57Z" fill="#00de28" stroke="#00de28" stroke-width="0.35"/>
<path d="M462.20 396.57 L467.71 396.85 L473.22 397.14 L478.74 397.45 L484.26 397.77 L489.77 398.10 L495.29 398.44 L495.53 405.13 L490.05 404.73 L484.56 404.33 L479.08 403.93 L473.60 403.53 L468.11 403.13 L462.63 402.73Z" fill="#00de79" stroke="#00de79" stroke-width="0.35"/>
<path d="M462.63 402.73 L468.11 403.13 L473.60 403.53 L479.08 403.93 L484.56 404.33 L490.05 404.73 L495.53 405.13 L495.54 405.19 L490.06 404.82 L484.58 404.46 L479.10 404.11 L473.63 403.76 L468.16 403.42 L462.70 403.10Z" fill="#00c76c" stroke="#00c76c" stroke-width="0.35"/>
<path d="M462.70 403.10 L468.16 403.42 L473.63 403.76 L479.10 404.11 L484.58 404.46 L490.06 404.82 L495.54 405.19 L496.13 411.73 L490.74 411.36 L485.36 410.99 L479.98 410.63 L474.60 410.28 L469.23 409.93 L463.86 409.60Z" fill="#00c7b5" stroke="#00c7b5" stroke-width="0.35"/>
<path d="M463.86 409.60 L469.23 409.93 L474.60 410.28 L479.98 410.63 L485.36 410.99 L490.74 411.36 L496.13 411.73 L496.76 418.74 L491.48 418.35 L486.20 417.98 L480.92 417.61 L475.64 417.24 L470.37 416.88 L465.09 416.52Z" fill="#0090c7" stroke="#0090c7" stroke-width="0.35"/>
<path d="M465.09 416.52 L470.37 416.88 L475.64 417.24 L480.92 417.61 L486.20 417.98 L491.48 418.35 L496.76 418.74 L497.28 424.41 L492.08 424.01 L486.88 423.61 L481.67 423.21 L476.47 422.81 L471.27 422.41 L466.07 422.01Z" fill="#0049c7" stroke="#0049c7" stroke-width="0.35"/>
<path d="M466.07 422.01 L471.27 422.41 L476.47 422.81 L481.67 423.21 L486.88 423.61 L492.08 424.01 L497.28 424.41 L497.69 428.93 L492.55 428.53 L487.42 428.13 L482.28 427.73 L477.15 427.33 L472.01 426.93 L466.88 426.53Z" fill="#0000c7" stroke="#0000c7" stroke-width="0.35"/>
<path d="M497.50 167.60 L503.25 167.60 L509.00 167.60 L514.75 167.60 L520.49 167.60 L526.24 167.60 L531.99 167.60 L532.03 172.86 L526.20 172.86 L520.37 172.86 L514.54 172.86 L508.71 172.86 L502.88 172.86 L497.05 172.86Z" fill="#0000eb" stroke="#0000eb" stroke-width="0.35"/>
<path d="M497.05 172.86 L502.88 172.86 L508.71 172.86 L514.54 172.86 L520.37 172.86 L526.20 172.86 L532.03 172.86 L532.07 179.51 L526.14 179.51 L520.21 179.51 L514.28 179.50 L508.34 179.49 L502.41 179.48 L496.48 179.46Z" fill="#0056eb" stroke="#0056eb" stroke-width="0.35"/>
<path d="M496.48 179.46 L502.41 179.48 L508.34 179.49 L514.28 179.50 L520.21 179.51 L526.14 179.51 L532.07 179.51 L532.13 187.68 L526.07 187.68 L520.01 187.68 L513.95 187.67 L507.90 187.66 L501.84 187.64 L495.78 187.61Z" fill="#00aaeb" stroke="#00aaeb" stroke-width="0.35"/>
<path d="M495.78 187.61 L501.84 187.64 L507.90 187.66 L513.95 187.67 L520.01 187.68 L526.07 187.68 L532.13 187.68 L532.18 195.30 L526.00 195.30 L519.83 195.29 L513.65 195.28 L507.48 195.27 L501.30 195.25 L495.13 195.22Z" fill="#00ebd5" stroke="#00ebd5" stroke-width="0.35"/>
<path d="M495.13 195.22 L501.30 195.25 L507.48 195.27 L513.65 195.28 L519.83 195.29 L526.00 195.30 L532.18 195.30 L532.18 195.30 L526.00 195.30 L519.83 195.30 L513.65 195.29 L507.48 195.29 L501.30 195.29 L495.13 195.29Z" fill="#00eb80" stroke="#00eb80" stroke-width="0.35"/>
<path d="M495.13 195.29 L501.30 195.29 L507.48 195.29 L513.65 195.29 L519.83 195.30 L526.00 195.30 L532.18 195.30 L532.20 202.36 L525.98 202.35 L519.76 202.35 L513.55 202.33 L507.33 202.31 L501.12 202.28 L494.90 202.24Z" fill="#00de79" stroke="#00de79" stroke-width="0.35"/>
<path d="M494.90 202.24 L501.12 202.28 L507.33 202.31 L513.55 202.33 L519.76 202.35 L525.98 202.35 L532.20 202.36 L532.22 210.73 L525.95 210.73 L519.69 210.72 L513.42 210.69 L507.16 210.65 L500.90 210.59 L494.64 210.51Z" fill="#00de28" stroke="#00de28" stroke-width="0.35"/>
<path d="M494.64 210.51 L500.90 210.59 L507.16 210.65 L513.42 210.69 L519.69 210.72 L525.95 210.73 L532.22 210.73 L532.23 217.64 L525.93 217.64 L519.63 217.62 L513.32 217.60 L507.02 217.55 L500.72 217.48 L494.42 217.39Z" fill="#28de00" stroke="#28de00" stroke-width="0.35"/>
<path d="M494.42 217.39 L500.72 217.48 L507.02 217.55 L513.32 217.60 L519.63 217.62 L525.93 217.64 L532.23 217.64 L532.25 224.11 L525.91 224.10 L519.57 224.09 L513.23 224.06 L506.89 224.01 L500.55 223.94 L494.21 223.85Z" fill="#79de00" stroke="#79de00" stroke-width="0.35"/>
<path d="M494.21 223.85 L500.55 223.94 L506.89 224.01 L513.23 224.06 L519.57 224.09 L525.91 224.10 L532.25 224.11 L532.25 224.70 L525.91 224.69 L519.56 224.69 L513.22 224.68 L506.87 224.67 L500.53 224.66 L494.18 224.66Z" fill="#cade00" stroke="#cade00" stroke-width="0.35"/>
<path d="M494.18 224.66 L500.53 224.66 L506.87 224.67 L513.22 224.68 L519.56 224.69 L525.91 224.69 L532.25 224.70 L532.26 230.85 L525.89 230.84 L519.51 230.82 L513.13 230.78 L506.76 230.70 L500.39 230.60 L494.01 230.45Z" fill="#c5d900" stroke="#c5d900" stroke-width="0.35"/>
<path d="M494.01 230.45 L500.39 230.60 L506.76 230.70 L513.13 230.78 L519.51 230.82 L525.89 230.84 L532.26 230.85 L532.31 251.36 L525.83 251.34 L519.34 251.31 L512.86 251.24 L506.38 251.12 L499.90 250.95 L493.42 250.72Z" fill="#d99d00" stroke="#d99d00" stroke-width="0.35"/>
<path d="M493.42 250.72 L499.90 250.95 L506.38 251.12 L512.86 251.24 L519.34 251.31 L525.83 251.34 L532.31 251.36 L532.32 256.25 L525.81 256.23 L519.30 256.21 L512.79 256.19 L506.28 256.18 L499.78 256.16 L493.27 256.14Z" fill="#d94f00" stroke="#d94f00" stroke-width="0.35"/>
<path d="M493.27 256.14 L499.78 256.16 L506.28 256.18 L512.79 256.19 L519.30 256.21 L525.81 256.23 L532.32 256.25 L532.34 276.03 L525.79 275.99 L519.24 275.91 L512.68 275.79 L506.13 275.59 L499.58 275.30 L493.03 274.91Z" fill="#d94f00" stroke="#d94f00" stroke-width="0.35"/>
<path d="M493.03 274.91 L499.58 275.30 L506.13 275.59 L512.68 275.79 L519.24 275.91 L525.79 275.99 L532.34 276.03 L532.35 286.00 L525.78 285.94 L519.20 285.89 L512.63 285.83 L506.05 285.78 L499.48 285.72 L492.90 285.67Z" fill="#d90000" stroke="#d90000" stroke-width="0.35"/>
<path d="M492.90 285.67 L499.48 285.72 L506.05 285.78 L512.63 285.83 L519.20 285.89 L525.78 285.94 L532.35 286.00 L532.35 317.50 L525.78 317.43 L519.21 317.36 L512.64 317.30 L506.08 317.23 L499.51 317.16 L492.94 317.09Z" fill="#d90000" stroke="#d90000" stroke-width="0.35"/>
<path d="M492.94 317.09 L499.51 317.16 L506.08 317.23 L512.64 317.30 L519.21 317.36 L525.78 317.43 L532.35 317.50 L532.33 327.38 L525.80 327.31 L519.28 327.26 L512.75 327.27 L506.23 327.36 L499.71 327.53 L493.20 327.80Z" fill="#d10000" stroke="#d10000" stroke-width="0.35"/>
<path d="M493.20 327.80 L499.71 327.53 L506.23 327.36 L512.75 327.27 L519.28 327.26 L525.80 327.31 L532.33 327.38 L532.29 347.00 L525.85 346.91 L519.41 346.83 L512.97 346.74 L506.53 346.65 L500.08 346.57 L493.64 346.48Z" fill="#d14c00" stroke="#d14c00" stroke-width="0.35"/>
<path d="M493.64 346.48 L500.08 346.57 L506.53 346.65 L512.97 346.74 L519.41 346.83 L525.85 346.91 L532.29 347.00 L532.28 351.72 L525.87 351.64 L519.45 351.57 L513.03 351.53 L506.62 351.53 L500.21 351.59 L493.80 351.71Z" fill="#cc4a00" stroke="#cc4a00" stroke-width="0.35"/>
<path d="M493.80 351.71 L500.21 351.59 L506.62 351.53 L513.03 351.53 L519.45 351.57 L525.87 351.64 L532.28 351.72 L532.24 371.55 L525.92 371.45 L519.61 371.35 L513.30 371.28 L506.99 371.24 L500.68 371.23 L494.37 371.26Z" fill="#cc9400" stroke="#cc9400" stroke-width="0.35"/>
<path d="M494.37 371.26 L500.68 371.23 L506.99 371.24 L513.30 371.28 L519.61 371.35 L525.92 371.45 L532.24 371.55 L532.22 377.50 L525.94 377.39 L519.66 377.28 L513.38 377.17 L507.10 377.07 L500.81 376.96 L494.53 376.85Z" fill="#bacc00" stroke="#bacc00" stroke-width="0.35"/>
<path d="M494.53 376.85 L500.81 376.96 L507.10 377.07 L513.38 377.17 L519.66 377.28 L525.94 377.39 L532.22 377.50 L532.22 378.06 L525.94 377.96 L519.67 377.86 L513.39 377.77 L507.11 377.70 L500.83 377.65 L494.56 377.63Z" fill="#bacc00" stroke="#bacc00" stroke-width="0.35"/>
<path d="M494.56 377.63 L500.83 377.65 L507.11 377.70 L513.39 377.77 L519.67 377.86 L525.94 377.96 L532.22 378.06 L532.21 384.31 L525.97 384.20 L519.73 384.10 L513.49 384.00 L507.25 383.93 L501.01 383.88 L494.78 383.85Z" fill="#6fcc00" stroke="#6fcc00" stroke-width="0.35"/>
<path d="M494.78 383.85 L501.01 383.88 L507.25 383.93 L513.49 384.00 L519.73 384.10 L525.97 384.20 L532.21 384.31 L532.19 390.99 L525.99 390.87 L519.79 390.76 L513.60 390.66 L507.40 390.58 L501.21 390.51 L495.01 390.47Z" fill="#25cc00" stroke="#25cc00" stroke-width="0.35"/>
<path d="M495.01 390.47 L501.21 390.51 L507.40 390.58 L513.60 390.66 L519.79 390.76 L525.99 390.87 L532.19 390.99 L532.16 399.08 L526.02 398.96 L519.87 398.84 L513.73 398.72 L507.58 398.62 L501.44 398.52 L495.29 398.44Z" fill="#00cc25" stroke="#00cc25" stroke-width="0.35"/>
<path d="M495.29 398.44 L501.44 398.52 L507.58 398.62 L513.73 398.72 L519.87 398.84 L526.02 398.96 L532.16 399.08 L532.15 405.90 L526.04 405.77 L519.94 405.64 L513.84 405.51 L507.74 405.39 L501.63 405.26 L495.53 405.13Z" fill="#00cc6f" stroke="#00cc6f" stroke-width="0.35"/>
<path d="M495.53 405.13 L501.63 405.26 L507.74 405.39 L513.84 405.51 L519.94 405.64 L526.04 405.77 L532.15 405.90 L532.15 405.90 L526.04 405.77 L519.94 405.64 L513.84 405.52 L507.74 405.40 L501.64 405.30 L495.54 405.19Z" fill="#00bd67" stroke="#00bd67" stroke-width="0.35"/>
<path d="M495.54 405.19 L501.64 405.30 L507.74 405.40 L513.84 405.52 L519.94 405.64 L526.04 405.77 L532.15 405.90 L532.10 412.44 L526.10 412.31 L520.11 412.19 L514.11 412.06 L508.12 411.95 L502.12 411.84 L496.13 411.73Z" fill="#00bdac" stroke="#00bdac" stroke-width="0.35"/>
<path d="M496.13 411.73 L502.12 411.84 L508.12 411.95 L514.11 412.06 L520.11 412.19 L526.10 412.31 L532.10 412.44 L532.05 419.46 L526.17 419.33 L520.29 419.21 L514.41 419.08 L508.52 418.96 L502.64 418.85 L496.76 418.74Z" fill="#0089bd" stroke="#0089bd" stroke-width="0.35"/>
<path d="M496.76 418.74 L502.64 418.85 L508.52 418.96 L514.41 419.08 L520.29 419.21 L526.17 419.33 L532.05 419.46 L532.01 425.17 L526.22 425.05 L520.43 424.92 L514.64 424.79 L508.85 424.66 L503.07 424.54 L497.28 424.41Z" fill="#0045bd" stroke="#0045bd" stroke-width="0.35"/>
<path d="M497.28 424.41 L503.07 424.54 L508.85 424.66 L514.64 424.79 L520.43 424.92 L526.22 425.05 L532.01 425.17 L531.98 429.70 L526.26 429.57 L520.55 429.44 L514.83 429.31 L509.12 429.19 L503.40 429.06 L497.69 428.93Z" fill="#0000bd" stroke="#0000bd" stroke-width="0.35"/>
<path d="M531.99 167.60 L537.74 167.60 L543.49 167.60 L549.25 167.60 L555.00 167.60 L560.75 167.60 L566.50 167.60 L567.02 172.86 L561.19 172.86 L555.36 172.86 L549.52 172.86 L543.69 172.86 L537.86 172.86 L532.03 172.86Z" fill="#0000ff" stroke="#0000ff" stroke-width="0.35"/>
<path d="M532.03 172.86 L537.86 172.86 L543.69 172.86 L549.52 172.86 L555.36 172.86 L561.19 172.86 L567.02 172.86 L567.67 179.44 L561.74 179.46 L555.81 179.48 L549.87 179.49 L543.94 179.50 L538.01 179.51 L532.07 179.51Z" fill="#005dff" stroke="#005dff" stroke-width="0.35"/>
<path d="M532.07 179.51 L538.01 179.51 L543.94 179.50 L549.87 179.49 L555.81 179.48 L561.74 179.46 L567.67 179.44 L568.48 187.58 L562.42 187.61 L556.36 187.64 L550.31 187.66 L544.25 187.67 L538.19 187.68 L532.13 187.68Z" fill="#00b9ff" stroke="#00b9ff" stroke-width="0.35"/>
<path d="M532.13 187.68 L538.19 187.68 L544.25 187.67 L550.31 187.66 L556.36 187.64 L562.42 187.61 L568.48 187.58 L569.23 195.18 L563.06 195.22 L556.88 195.25 L550.71 195.27 L544.53 195.29 L538.35 195.30 L532.18 195.30Z" fill="#00ffe8" stroke="#00ffe8" stroke-width="0.35"/>
<path d="M532.18 195.30 L538.35 195.30 L544.53 195.29 L550.71 195.27 L556.88 195.25 L563.06 195.22 L569.23 195.18 L569.24 195.29 L563.06 195.29 L556.89 195.29 L550.71 195.29 L544.53 195.29 L538.35 195.30 L532.18 195.30Z" fill="#00ff8b" stroke="#00ff8b" stroke-width="0.35"/>
<path d="M532.18 195.30 L538.35 195.30 L544.53 195.29 L550.71 195.29 L556.89 195.29 L563.06 195.29 L569.24 195.29 L569.50 202.19 L563.28 202.24 L557.07 202.28 L550.85 202.32 L544.63 202.34 L538.41 202.35 L532.20 202.36Z" fill="#00f787" stroke="#00f787" stroke-width="0.35"/>
<path d="M532.20 202.36 L538.41 202.35 L544.63 202.34 L550.85 202.32 L557.07 202.28 L563.28 202.24 L569.50 202.19 L569.80 210.41 L563.54 210.52 L557.28 210.60 L551.01 210.66 L544.75 210.70 L538.48 210.72 L532.22 210.73Z" fill="#00f72d" stroke="#00f72d" stroke-width="0.35"/>
<path d="M532.22 210.73 L538.48 210.72 L544.75 210.70 L551.01 210.66 L557.28 210.60 L563.54 210.52 L569.80 210.41 L570.06 217.27 L563.76 217.40 L557.46 217.49 L551.15 217.56 L544.85 217.60 L538.54 217.63 L532.23 217.64Z" fill="#2df700" stroke="#2df700" stroke-width="0.35"/>
<path d="M532.23 217.64 L538.54 217.63 L544.85 217.60 L551.15 217.56 L557.46 217.49 L563.76 217.40 L570.06 217.27 L570.30 223.73 L563.96 223.86 L557.62 223.95 L551.28 224.02 L544.94 224.07 L538.59 224.10 L532.25 224.11Z" fill="#87f700" stroke="#87f700" stroke-width="0.35"/>
<path d="M532.25 224.11 L538.59 224.10 L544.94 224.07 L551.28 224.02 L557.62 223.95 L563.96 223.86 L570.30 223.73 L570.33 224.64 L563.99 224.65 L557.64 224.66 L551.29 224.67 L544.94 224.68 L538.60 224.69 L532.25 224.70Z" fill="#e1f700" stroke="#e1f700" stroke-width="0.35"/>
<path d="M532.25 224.70 L538.60 224.69 L544.94 224.68 L551.29 224.67 L557.64 224.66 L563.99 224.65 L570.33 224.64 L570.52 230.27 L564.15 230.46 L557.78 230.61 L551.40 230.71 L545.02 230.79 L538.64 230.83 L532.26 230.85Z" fill="#e8ff00" stroke="#e8ff00" stroke-width="0.35"/>
<path d="M532.26 230.85 L538.64 230.83 L545.02 230.79 L551.40 230.71 L557.78 230.61 L564.15 230.46 L570.52 230.27 L571.20 250.43 L564.73 250.74 L558.25 250.97 L551.77 251.14 L545.28 251.25 L538.80 251.32 L532.31 251.36Z" fill="#ffb900" stroke="#ffb900" stroke-width="0.35"/>
<path d="M532.31 251.36 L538.80 251.32 L545.28 251.25 L551.77 251.14 L558.25 250.97 L564.73 250.74 L571.20 250.43 L571.39 256.10 L564.88 256.13 L558.37 256.15 L551.86 256.17 L545.35 256.20 L538.83 256.22 L532.32 256.25Z" fill="#ff5d00" stroke="#ff5d00" stroke-width="0.35"/>
<path d="M532.32 256.25 L538.83 256.22 L545.35 256.20 L551.86 256.17 L558.37 256.15 L564.88 256.13 L571.39 256.10 L571.65 274.43 L565.11 274.93 L558.56 275.32 L552.00 275.61 L545.45 275.82 L538.90 275.95 L532.34 276.03Z" fill="#d14c00" stroke="#d14c00" stroke-width="0.35"/>
<path d="M532.34 276.03 L538.90 275.95 L545.45 275.82 L552.00 275.61 L558.56 275.32 L565.11 274.93 L571.65 274.43 L571.81 285.55 L565.24 285.63 L558.66 285.70 L552.08 285.77 L545.50 285.85 L538.93 285.92 L532.35 286.00Z" fill="#d10000" stroke="#d10000" stroke-width="0.35"/>
<path d="M532.35 286.00 L538.93 285.92 L545.50 285.85 L552.08 285.77 L558.66 285.70 L565.24 285.63 L571.81 285.55 L571.77 316.95 L565.20 317.04 L558.63 317.13 L552.06 317.22 L545.49 317.32 L538.92 317.41 L532.35 317.50Z" fill="#c90000" stroke="#c90000" stroke-width="0.35"/>
<path d="M532.35 317.50 L538.92 317.41 L545.49 317.32 L552.06 317.22 L558.63 317.13 L565.20 317.04 L571.77 316.95 L571.46 328.04 L564.95 327.69 L558.43 327.46 L551.91 327.33 L545.38 327.28 L538.86 327.31 L532.33 327.38Z" fill="#c70000" stroke="#c70000" stroke-width="0.35"/>
<path d="M532.33 327.38 L538.86 327.31 L545.38 327.28 L551.91 327.33 L558.43 327.46 L564.95 327.69 L571.46 328.04 L570.96 346.30 L564.51 346.42 L558.07 346.53 L551.62 346.65 L545.18 346.77 L538.74 346.88 L532.29 347.00Z" fill="#c74900" stroke="#c74900" stroke-width="0.35"/>
<path d="M532.29 347.00 L538.74 346.88 L545.18 346.77 L551.62 346.65 L558.07 346.53 L564.51 346.42 L570.96 346.30 L570.77 351.76 L564.36 351.61 L557.95 351.53 L551.54 351.51 L545.12 351.54 L538.70 351.62 L532.28 351.72Z" fill="#c44800" stroke="#c44800" stroke-width="0.35"/>
<path d="M532.28 351.72 L538.70 351.62 L545.12 351.54 L551.54 351.51 L557.95 351.53 L564.36 351.61 L570.77 351.76 L570.11 371.20 L563.80 371.17 L557.49 371.18 L551.18 371.23 L544.87 371.31 L538.55 371.42 L532.24 371.55Z" fill="#c48e00" stroke="#c48e00" stroke-width="0.35"/>
<path d="M532.24 371.55 L538.55 371.42 L544.87 371.31 L551.18 371.23 L557.49 371.18 L563.80 371.17 L570.11 371.20 L569.93 376.63 L563.64 376.77 L557.36 376.92 L551.08 377.06 L544.79 377.21 L538.51 377.35 L532.22 377.50Z" fill="#b3c400" stroke="#b3c400" stroke-width="0.35"/>
<path d="M532.22 377.50 L538.51 377.35 L544.79 377.21 L551.08 377.06 L557.36 376.92 L563.64 376.77 L569.93 376.63 L569.89 377.50 L563.62 377.54 L557.34 377.60 L551.06 377.69 L544.78 377.80 L538.50 377.93 L532.22 378.06Z" fill="#b5c700" stroke="#b5c700" stroke-width="0.35"/>
<path d="M532.22 378.06 L538.50 377.93 L544.78 377.80 L551.06 377.69 L557.34 377.60 L563.62 377.54 L569.89 377.50 L569.64 383.71 L563.40 383.76 L557.17 383.82 L550.93 383.92 L544.69 384.03 L538.45 384.17 L532.21 384.31Z" fill="#6cc700" stroke="#6cc700" stroke-width="0.35"/>
<path d="M532.21 384.31 L538.45 384.17 L544.69 384.03 L550.93 383.92 L557.17 383.82 L563.40 383.76 L569.64 383.71 L569.37 390.31 L563.17 390.37 L556.98 390.46 L550.78 390.57 L544.58 390.69 L538.39 390.83 L532.19 390.99Z" fill="#24c700" stroke="#24c700" stroke-width="0.35"/>
<path d="M532.19 390.99 L538.39 390.83 L544.58 390.69 L550.78 390.57 L556.98 390.46 L563.17 390.37 L569.37 390.31 L569.05 398.22 L562.90 398.34 L556.75 398.47 L550.61 398.61 L544.46 398.76 L538.31 398.92 L532.16 399.08Z" fill="#00c724" stroke="#00c724" stroke-width="0.35"/>
<path d="M532.16 399.08 L538.31 398.92 L544.46 398.76 L550.61 398.61 L556.75 398.47 L562.90 398.34 L569.05 398.22 L568.77 404.86 L562.67 405.04 L556.56 405.21 L550.46 405.38 L544.36 405.55 L538.25 405.72 L532.15 405.90Z" fill="#00c76c" stroke="#00c76c" stroke-width="0.35"/>
<path d="M532.15 405.90 L538.25 405.72 L544.36 405.55 L550.46 405.38 L556.56 405.21 L562.67 405.04 L568.77 404.86 L568.76 404.96 L562.66 405.09 L556.56 405.24 L550.46 405.40 L544.36 405.56 L538.25 405.73 L532.15 405.90Z" fill="#00b261" stroke="#00b261" stroke-width="0.35"/>
<path d="M532.15 405.90 L538.25 405.73 L544.36 405.56 L550.46 405.40 L556.56 405.24 L562.66 405.09 L568.76 404.96 L568.08 411.49 L562.09 411.63 L556.09 411.78 L550.09 411.94 L544.10 412.10 L538.10 412.27 L532.10 412.44Z" fill="#00b2a2" stroke="#00b2a2" stroke-width="0.35"/>
<path d="M532.10 412.44 L538.10 412.27 L544.10 412.10 L550.09 411.94 L556.09 411.78 L562.09 411.63 L568.08 411.49 L567.35 418.49 L561.47 418.64 L555.58 418.80 L549.70 418.96 L543.82 419.12 L537.93 419.29 L532.05 419.46Z" fill="#0082b2" stroke="#0082b2" stroke-width="0.35"/>
<path d="M532.05 419.46 L537.93 419.29 L543.82 419.12 L549.70 418.96 L555.58 418.80 L561.47 418.64 L567.35 418.49 L566.75 424.14 L560.96 424.31 L555.17 424.49 L549.38 424.66 L543.59 424.83 L537.80 425.00 L532.01 425.17Z" fill="#0041b2" stroke="#0041b2" stroke-width="0.35"/>
<path d="M532.01 425.17 L537.80 425.00 L543.59 424.83 L549.38 424.66 L555.17 424.49 L560.96 424.31 L566.75 424.14 L566.28 428.66 L560.56 428.84 L554.85 429.01 L549.13 429.18 L543.41 429.35 L537.70 429.52 L531.98 429.70Z" fill="#0000b2" stroke="#0000b2" stroke-width="0.35"/>
<path d="M566.50 167.60 L571.68 167.60 L576.87 167.60 L582.05 167.60 L587.23 167.60 L592.41 167.60 L597.60 167.60 L598.56 172.85 L593.30 172.85 L588.04 172.86 L582.79 172.86 L577.53 172.86 L572.28 172.86 L567.02 172.86Z" fill="#0000b5" stroke="#0000b5" stroke-width="0.35"/>
<path d="M567.02 172.86 L572.28 172.86 L577.53 172.86 L582.79 172.86 L588.04 172.86 L593.30 172.85 L598.56 172.85 L599.71 179.16 L594.38 179.23 L589.04 179.28 L583.70 179.33 L578.36 179.37 L573.02 179.41 L567.67 179.44Z" fill="#0042b5" stroke="#0042b5" stroke-width="0.35"/>
<path d="M567.67 179.44 L573.02 179.41 L578.36 179.37 L583.70 179.33 L589.04 179.28 L594.38 179.23 L599.71 179.16 L601.18 187.19 L595.73 187.28 L590.29 187.36 L584.84 187.42 L579.39 187.48 L573.93 187.54 L568.48 187.58Z" fill="#0083b5" stroke="#0083b5" stroke-width="0.35"/>
<path d="M568.48 187.58 L573.93 187.54 L579.39 187.48 L584.84 187.42 L590.29 187.36 L595.73 187.28 L601.18 187.19 L602.55 194.72 L597.01 194.83 L591.46 194.92 L585.91 195.00 L580.35 195.07 L574.79 195.13 L569.23 195.18Z" fill="#00b5a5" stroke="#00b5a5" stroke-width="0.35"/>
<path d="M569.23 195.18 L574.79 195.13 L580.35 195.07 L585.91 195.00 L591.46 194.92 L597.01 194.83 L602.55 194.72 L602.65 195.25 L597.08 195.25 L591.51 195.26 L585.94 195.27 L580.38 195.27 L574.81 195.28 L569.24 195.29Z" fill="#00b563" stroke="#00b563" stroke-width="0.35"/>
<path d="M569.24 195.29 L574.81 195.28 L580.38 195.27 L585.94 195.27 L591.51 195.26 L597.08 195.25 L602.65 195.25 L603.08 201.57 L597.49 201.71 L591.89 201.84 L586.30 201.94 L580.70 202.04 L575.10 202.12 L569.50 202.19Z" fill="#00b361" stroke="#00b361" stroke-width="0.35"/>
<path d="M569.50 202.19 L575.10 202.12 L580.70 202.04 L586.30 201.94 L591.89 201.84 L597.49 201.71 L603.08 201.57 L603.61 209.22 L597.98 209.49 L592.35 209.73 L586.72 209.94 L581.08 210.12 L575.45 210.28 L569.80 210.41Z" fill="#00b320" stroke="#00b320" stroke-width="0.35"/>
<path d="M569.80 210.41 L575.45 210.28 L581.08 210.12 L586.72 209.94 L592.35 209.73 L597.98 209.49 L603.61 209.22 L604.07 215.90 L598.41 216.21 L592.75 216.49 L587.08 216.73 L581.41 216.94 L575.74 217.12 L570.06 217.27Z" fill="#20b300" stroke="#20b300" stroke-width="0.35"/>
<path d="M570.06 217.27 L575.74 217.12 L581.41 216.94 L587.08 216.73 L592.75 216.49 L598.41 216.21 L604.07 215.90 L604.51 222.33 L598.82 222.65 L593.12 222.93 L587.42 223.18 L581.72 223.39 L576.01 223.58 L570.30 223.73Z" fill="#61b300" stroke="#61b300" stroke-width="0.35"/>
<path d="M570.30 223.73 L576.01 223.58 L581.72 223.39 L587.42 223.18 L593.12 222.93 L598.82 222.65 L604.51 222.33 L604.65 224.48 L598.93 224.51 L593.21 224.54 L587.49 224.56 L581.77 224.59 L576.05 224.61 L570.33 224.64Z" fill="#a3b300" stroke="#a3b300" stroke-width="0.35"/>
<path d="M570.33 224.64 L576.05 224.61 L581.77 224.59 L587.49 224.56 L593.21 224.54 L598.93 224.51 L604.65 224.48 L604.88 228.12 L599.17 228.61 L593.45 229.04 L587.73 229.42 L582.00 229.75 L576.26 230.03 L570.52 230.27Z" fill="#a0b000" stroke="#a0b000" stroke-width="0.35"/>
<path d="M570.52 230.27 L576.26 230.03 L582.00 229.75 L587.73 229.42 L593.45 229.04 L599.17 228.61 L604.88 228.12 L606.06 247.04 L600.28 247.81 L594.48 248.49 L588.67 249.09 L582.86 249.61 L577.03 250.06 L571.20 250.43Z" fill="#b08000" stroke="#b08000" stroke-width="0.35"/>
<path d="M571.20 250.43 L577.03 250.06 L582.86 249.61 L588.67 249.09 L594.48 248.49 L600.28 247.81 L606.06 247.04 L606.61 255.71 L600.74 255.77 L594.87 255.84 L589.00 255.90 L583.13 255.97 L577.26 256.03 L571.39 256.10Z" fill="#b04000" stroke="#b04000" stroke-width="0.35"/>
<path d="M571.39 256.10 L577.26 256.03 L583.13 255.97 L589.00 255.90 L594.87 255.84 L600.74 255.77 L606.61 255.71 L606.96 268.79 L601.09 270.03 L595.22 271.14 L589.33 272.14 L583.44 273.01 L577.55 273.77 L571.65 274.43Z" fill="#b04000" stroke="#b04000" stroke-width="0.35"/>
<path d="M571.65 274.43 L577.55 273.77 L583.44 273.01 L589.33 272.14 L595.22 271.14 L601.09 270.03 L606.96 268.79 L607.38 284.37 L601.45 284.57 L595.52 284.76 L589.60 284.96 L583.67 285.16 L577.74 285.35 L571.81 285.55Z" fill="#b00000" stroke="#b00000" stroke-width="0.35"/>
<path d="M571.81 285.55 L577.74 285.35 L583.67 285.16 L589.60 284.96 L595.52 284.76 L601.45 284.57 L607.38 284.37 L607.29 315.51 L601.37 315.75 L595.45 315.99 L589.53 316.23 L583.61 316.47 L577.69 316.71 L571.77 316.95Z" fill="#ae0000" stroke="#ae0000" stroke-width="0.35"/>
<path d="M571.77 316.95 L577.69 316.71 L583.61 316.47 L589.53 316.23 L595.45 315.99 L601.37 315.75 L607.29 315.51 L606.48 331.25 L600.68 330.40 L594.86 329.69 L589.02 329.10 L583.18 328.63 L577.32 328.28 L571.46 328.04Z" fill="#ab0000" stroke="#ab0000" stroke-width="0.35"/>
<path d="M571.46 328.04 L577.32 328.28 L583.18 328.63 L589.02 329.10 L594.86 329.69 L600.68 330.40 L606.48 331.25 L605.80 344.47 L599.99 344.77 L594.19 345.08 L588.38 345.38 L582.57 345.69 L576.76 346.00 L570.96 346.30Z" fill="#ab3e00" stroke="#ab3e00" stroke-width="0.35"/>
<path d="M570.96 346.30 L576.76 346.00 L582.57 345.69 L588.38 345.38 L594.19 345.08 L599.99 344.77 L605.80 344.47 L605.28 352.76 L599.55 352.40 L593.81 352.13 L588.06 351.93 L582.30 351.81 L576.54 351.75 L570.77 351.76Z" fill="#ab3e00" stroke="#ab3e00" stroke-width="0.35"/>
<path d="M570.77 351.76 L576.54 351.75 L582.30 351.81 L588.06 351.93 L593.81 352.13 L599.55 352.40 L605.28 352.76 L604.13 370.86 L598.47 370.79 L592.81 370.78 L587.14 370.82 L581.47 370.90 L575.79 371.03 L570.11 371.20Z" fill="#ab7c00" stroke="#ab7c00" stroke-width="0.35"/>
<path d="M570.11 371.20 L575.79 371.03 L581.47 370.90 L587.14 370.82 L592.81 370.78 L598.47 370.79 L604.13 370.86 L603.91 374.33 L598.25 374.72 L592.58 375.10 L586.92 375.48 L581.25 375.86 L575.59 376.25 L569.93 376.63Z" fill="#9cab00" stroke="#9cab00" stroke-width="0.35"/>
<path d="M569.93 376.63 L575.59 376.25 L581.25 375.86 L586.92 375.48 L592.58 375.10 L598.25 374.72 L603.91 374.33 L603.75 376.38 L598.12 376.49 L592.48 376.63 L586.84 376.81 L581.19 377.01 L575.54 377.24 L569.89 377.50Z" fill="#a0b000" stroke="#a0b000" stroke-width="0.35"/>
<path d="M569.89 377.50 L575.54 377.24 L581.19 377.01 L586.84 376.81 L592.48 376.63 L598.12 376.49 L603.75 376.38 L603.29 382.49 L597.69 382.62 L592.09 382.78 L586.48 382.97 L580.87 383.19 L575.26 383.44 L569.64 383.71Z" fill="#60b000" stroke="#60b000" stroke-width="0.35"/>
<path d="M569.64 383.71 L575.26 383.44 L580.87 383.19 L586.48 382.97 L592.09 382.78 L597.69 382.62 L603.29 382.49 L602.80 388.85 L597.24 389.03 L591.67 389.23 L586.10 389.46 L580.53 389.72 L574.95 390.01 L569.37 390.31Z" fill="#20b000" stroke="#20b000" stroke-width="0.35"/>
<path d="M569.37 390.31 L574.95 390.01 L580.53 389.72 L586.10 389.46 L591.67 389.23 L597.24 389.03 L602.80 388.85 L602.25 396.12 L596.72 396.44 L591.19 396.77 L585.65 397.11 L580.12 397.47 L574.58 397.84 L569.05 398.22Z" fill="#00b020" stroke="#00b020" stroke-width="0.35"/>
<path d="M569.05 398.22 L574.58 397.84 L580.12 397.47 L585.65 397.11 L591.19 396.77 L596.72 396.44 L602.25 396.12 L601.79 402.14 L596.28 402.59 L590.78 403.05 L585.28 403.50 L579.78 403.95 L574.28 404.41 L568.77 404.86Z" fill="#00b060" stroke="#00b060" stroke-width="0.35"/>
<path d="M568.77 404.86 L574.28 404.41 L579.78 403.95 L585.28 403.50 L590.78 403.05 L596.28 402.59 L601.79 402.14 L601.70 402.59 L596.22 402.96 L590.73 403.34 L585.25 403.73 L579.75 404.13 L574.26 404.54 L568.76 404.96Z" fill="#009d55" stroke="#009d55" stroke-width="0.35"/>
<path d="M568.76 404.96 L574.26 404.54 L579.75 404.13 L585.25 403.73 L590.73 403.34 L596.22 402.96 L601.70 402.59 L600.45 409.07 L595.06 409.46 L589.67 409.85 L584.28 410.25 L578.88 410.65 L573.48 411.07 L568.08 411.49Z" fill="#009d8f" stroke="#009d8f" stroke-width="0.35"/>
<path d="M568.08 411.49 L573.48 411.07 L578.88 410.65 L584.28 410.25 L589.67 409.85 L595.06 409.46 L600.45 409.07 L599.12 415.98 L593.83 416.39 L588.53 416.79 L583.24 417.21 L577.94 417.63 L572.65 418.06 L567.35 418.49Z" fill="#00729d" stroke="#00729d" stroke-width="0.35"/>
<path d="M567.35 418.49 L572.65 418.06 L577.94 417.63 L583.24 417.21 L588.53 416.79 L593.83 416.39 L599.12 415.98 L598.07 421.41 L592.85 421.87 L587.63 422.32 L582.41 422.78 L577.19 423.23 L571.97 423.69 L566.75 424.14Z" fill="#00399d" stroke="#00399d" stroke-width="0.35"/>
<path d="M566.75 424.14 L571.97 423.69 L577.19 423.23 L582.41 422.78 L587.63 422.32 L592.85 421.87 L598.07 421.41 L597.20 425.94 L592.04 426.39 L586.89 426.85 L581.74 427.30 L576.59 427.75 L571.43 428.21 L566.28 428.66Z" fill="#00009d" stroke="#00009d" stroke-width="0.35"/>
<path d="M597.60 167.60 L601.68 167.60 L605.76 167.60 L609.84 167.60 L613.92 167.60 L618.00 167.60 L622.09 167.60 L623.39 172.84 L619.25 172.84 L615.11 172.85 L610.97 172.85 L606.83 172.85 L602.70 172.85 L598.56 172.85Z" fill="#0000ab" stroke="#0000ab" stroke-width="0.35"/>
<path d="M598.56 172.85 L602.70 172.85 L606.83 172.85 L610.97 172.85 L615.11 172.85 L619.25 172.84 L623.39 172.84 L624.86 178.74 L620.67 178.82 L616.49 178.90 L612.30 178.97 L608.10 179.04 L603.91 179.10 L599.71 179.16Z" fill="#003eab" stroke="#003eab" stroke-width="0.35"/>
<path d="M599.71 179.16 L603.91 179.10 L608.10 179.04 L612.30 178.97 L616.49 178.90 L620.67 178.82 L624.86 178.74 L626.81 186.59 L622.55 186.71 L618.28 186.82 L614.01 186.92 L609.73 187.02 L605.46 187.11 L601.18 187.19Z" fill="#007cab" stroke="#007cab" stroke-width="0.35"/>
<path d="M601.18 187.19 L605.46 187.11 L609.73 187.02 L614.01 186.92 L618.28 186.82 L622.55 186.71 L626.81 186.59 L628.66 194.03 L624.32 194.17 L619.98 194.30 L615.63 194.42 L611.27 194.53 L606.91 194.63 L602.55 194.72Z" fill="#00ab9c" stroke="#00ab9c" stroke-width="0.35"/>
<path d="M602.55 194.72 L606.91 194.63 L611.27 194.53 L615.63 194.42 L619.98 194.30 L624.32 194.17 L628.66 194.03 L628.95 195.19 L624.57 195.20 L620.18 195.21 L615.80 195.22 L611.41 195.23 L607.03 195.24 L602.65 195.25Z" fill="#00ab5d" stroke="#00ab5d" stroke-width="0.35"/>
<path d="M602.65 195.25 L607.03 195.24 L611.41 195.23 L615.80 195.22 L620.18 195.21 L624.57 195.20 L628.95 195.19 L629.46 200.64 L625.07 200.82 L620.68 201.00 L616.28 201.16 L611.88 201.31 L607.48 201.44 L603.08 201.57Z" fill="#00ab5d" stroke="#00ab5d" stroke-width="0.35"/>
<path d="M603.08 201.57 L607.48 201.44 L611.88 201.31 L616.28 201.16 L620.68 201.00 L625.07 200.82 L629.46 200.64 L630.10 207.40 L625.69 207.76 L621.28 208.09 L616.87 208.41 L612.45 208.70 L608.03 208.97 L603.61 209.22Z" fill="#00ab1f" stroke="#00ab1f" stroke-width="0.35"/>
<path d="M603.61 209.22 L608.03 208.97 L612.45 208.70 L616.87 208.41 L621.28 208.09 L625.69 207.76 L630.10 207.40 L630.70 213.82 L626.27 214.23 L621.84 214.61 L617.40 214.97 L612.96 215.31 L608.52 215.62 L604.07 215.90Z" fill="#1fab00" stroke="#1fab00" stroke-width="0.35"/>
<path d="M604.07 215.90 L608.52 215.62 L612.96 215.31 L617.40 214.97 L621.84 214.61 L626.27 214.23 L630.70 213.82 L631.30 220.21 L626.85 220.63 L622.39 221.02 L617.93 221.39 L613.46 221.73 L608.98 222.04 L604.51 222.33Z" fill="#5dab00" stroke="#5dab00" stroke-width="0.35"/>
<path d="M604.51 222.33 L608.98 222.04 L613.46 221.73 L617.93 221.39 L622.39 221.02 L626.85 220.63 L631.30 220.21 L631.68 224.25 L627.18 224.29 L622.67 224.33 L618.17 224.37 L613.66 224.41 L609.16 224.44 L604.65 224.48Z" fill="#9cab00" stroke="#9cab00" stroke-width="0.35"/>
<path d="M604.65 224.48 L609.16 224.44 L613.66 224.41 L618.17 224.37 L622.67 224.33 L627.18 224.29 L631.68 224.25 L631.73 224.88 L627.28 225.52 L622.81 226.12 L618.34 226.67 L613.86 227.19 L609.37 227.67 L604.88 228.12Z" fill="#9aa900" stroke="#9aa900" stroke-width="0.35"/>
<path d="M604.88 228.12 L609.37 227.67 L613.86 227.19 L618.34 226.67 L622.81 226.12 L627.28 225.52 L631.73 224.88 L633.20 241.93 L628.70 242.93 L624.20 243.87 L619.68 244.75 L615.15 245.57 L610.61 246.33 L606.06 247.04Z" fill="#a97b00" stroke="#a97b00" stroke-width="0.35"/>
<path d="M606.06 247.04 L610.61 246.33 L615.15 245.57 L619.68 244.75 L624.20 243.87 L628.70 242.93 L633.20 241.93 L634.33 255.13 L629.71 255.22 L625.09 255.32 L620.47 255.42 L615.85 255.51 L611.23 255.61 L606.61 255.71Z" fill="#a93e00" stroke="#a93e00" stroke-width="0.35"/>
<path d="M606.61 255.71 L611.23 255.61 L615.85 255.51 L620.47 255.42 L625.09 255.32 L629.71 255.22 L634.33 255.13 L634.54 260.66 L629.96 262.22 L625.38 263.69 L620.78 265.08 L616.18 266.40 L611.57 267.63 L606.96 268.79Z" fill="#a93e00" stroke="#a93e00" stroke-width="0.35"/>
<path d="M606.96 268.79 L611.57 267.63 L616.18 266.40 L620.78 265.08 L625.38 263.69 L629.96 262.22 L634.54 260.66 L635.38 282.63 L630.72 282.92 L626.05 283.21 L621.38 283.50 L616.71 283.79 L612.05 284.08 L607.38 284.37Z" fill="#a90000" stroke="#a90000" stroke-width="0.35"/>
<path d="M607.38 284.37 L612.05 284.08 L616.71 283.79 L621.38 283.50 L626.05 283.21 L630.72 282.92 L635.38 282.63 L635.27 313.38 L630.61 313.74 L625.94 314.09 L621.28 314.45 L616.62 314.80 L611.96 315.16 L607.29 315.51Z" fill="#a20000" stroke="#a20000" stroke-width="0.35"/>
<path d="M607.29 315.51 L611.96 315.16 L616.62 314.80 L621.28 314.45 L625.94 314.09 L630.61 313.74 L635.27 313.38 L633.65 336.05 L629.16 335.02 L624.65 334.09 L620.13 333.25 L615.59 332.49 L611.04 331.83 L606.48 331.25Z" fill="#9f0000" stroke="#9f0000" stroke-width="0.35"/>
<path d="M606.48 331.25 L611.04 331.83 L615.59 332.49 L620.13 333.25 L624.65 334.09 L629.16 335.02 L633.65 336.05 L633.24 341.76 L628.67 342.21 L624.09 342.66 L619.52 343.11 L614.95 343.56 L610.38 344.02 L605.80 344.47Z" fill="#9f3a00" stroke="#9f3a00" stroke-width="0.35"/>
<path d="M605.80 344.47 L610.38 344.02 L614.95 343.56 L619.52 343.11 L624.09 342.66 L628.67 342.21 L633.24 341.76 L632.14 354.24 L627.69 353.86 L623.23 353.53 L618.75 353.26 L614.27 353.04 L609.78 352.87 L605.28 352.76Z" fill="#a43c00" stroke="#a43c00" stroke-width="0.35"/>
<path d="M605.28 352.76 L609.78 352.87 L614.27 353.04 L618.75 353.26 L623.23 353.53 L627.69 353.86 L632.14 354.24 L630.72 370.35 L626.30 370.35 L621.88 370.38 L617.45 370.45 L613.02 370.55 L608.58 370.69 L604.13 370.86Z" fill="#a47700" stroke="#a47700" stroke-width="0.35"/>
<path d="M604.13 370.86 L608.58 370.69 L613.02 370.55 L617.45 370.45 L621.88 370.38 L626.30 370.35 L630.72 370.35 L630.67 370.95 L626.21 371.51 L621.75 372.08 L617.29 372.64 L612.83 373.21 L608.37 373.77 L603.91 374.33Z" fill="#95a400" stroke="#95a400" stroke-width="0.35"/>
<path d="M603.91 374.33 L608.37 373.77 L612.83 373.21 L617.29 372.64 L621.75 372.08 L626.21 371.51 L630.67 370.95 L630.26 374.73 L625.86 374.95 L621.45 375.19 L617.03 375.45 L612.61 375.74 L608.18 376.05 L603.75 376.38Z" fill="#93a200" stroke="#93a200" stroke-width="0.35"/>
<path d="M603.75 376.38 L608.18 376.05 L612.61 375.74 L617.03 375.45 L621.45 375.19 L625.86 374.95 L630.26 374.73 L629.63 380.70 L625.25 380.95 L620.87 381.21 L616.48 381.50 L612.09 381.81 L607.69 382.14 L603.29 382.49Z" fill="#58a200" stroke="#58a200" stroke-width="0.35"/>
<path d="M603.29 382.49 L607.69 382.14 L612.09 381.81 L616.48 381.50 L620.87 381.21 L625.25 380.95 L629.63 380.70 L628.99 386.70 L624.64 387.01 L620.28 387.34 L615.92 387.69 L611.55 388.06 L607.18 388.45 L602.80 388.85Z" fill="#1da200" stroke="#1da200" stroke-width="0.35"/>
<path d="M602.80 388.85 L607.18 388.45 L611.55 388.06 L615.92 387.69 L620.28 387.34 L624.64 387.01 L628.99 386.70 L628.32 393.02 L623.98 393.51 L619.64 394.01 L615.29 394.53 L610.95 395.05 L606.60 395.58 L602.25 396.12Z" fill="#00a21d" stroke="#00a21d" stroke-width="0.35"/>
<path d="M602.25 396.12 L606.60 395.58 L610.95 395.05 L615.29 394.53 L619.64 394.01 L623.98 393.51 L628.32 393.02 L627.78 398.12 L623.45 398.79 L619.12 399.46 L614.78 400.13 L610.45 400.80 L606.12 401.47 L601.79 402.14Z" fill="#00a258" stroke="#00a258" stroke-width="0.35"/>
<path d="M601.79 402.14 L606.12 401.47 L610.45 400.80 L614.78 400.13 L619.12 399.46 L623.45 398.79 L627.78 398.12 L627.52 399.11 L623.23 399.67 L618.93 400.24 L614.63 400.82 L610.32 401.40 L606.01 401.99 L601.70 402.59Z" fill="#008e4d" stroke="#008e4d" stroke-width="0.35"/>
<path d="M601.70 402.59 L606.01 401.99 L610.32 401.40 L614.63 400.82 L618.93 400.24 L623.23 399.67 L627.52 399.11 L625.84 405.53 L621.61 406.11 L617.39 406.69 L613.16 407.28 L608.92 407.87 L604.69 408.47 L600.45 409.07Z" fill="#008e81" stroke="#008e81" stroke-width="0.35"/>
<path d="M600.45 409.07 L604.69 408.47 L608.92 407.87 L613.16 407.28 L617.39 406.69 L621.61 406.11 L625.84 405.53 L624.06 412.31 L619.91 412.91 L615.75 413.51 L611.60 414.12 L607.44 414.74 L603.28 415.36 L599.12 415.98Z" fill="#00678e" stroke="#00678e" stroke-width="0.35"/>
<path d="M599.12 415.98 L603.28 415.36 L607.44 414.74 L611.60 414.12 L615.75 413.51 L619.91 412.91 L624.06 412.31 L622.73 417.39 L618.62 418.06 L614.51 418.73 L610.40 419.40 L606.29 420.07 L602.18 420.74 L598.07 421.41Z" fill="#00348e" stroke="#00348e" stroke-width="0.35"/>
<path d="M598.07 421.41 L602.18 420.74 L606.29 420.07 L610.40 419.40 L614.51 418.73 L618.62 418.06 L622.73 417.39 L621.54 421.92 L617.48 422.59 L613.43 423.26 L609.37 423.93 L605.31 424.60 L601.25 425.27 L597.20 425.94Z" fill="#00008e" stroke="#00008e" stroke-width="0.35"/>
<path d="M622.09 167.60 L625.00 167.60 L627.92 167.60 L630.84 167.60 L633.76 167.60 L636.68 167.60 L639.59 167.60 L641.15 172.83 L638.19 172.83 L635.23 172.83 L632.27 172.83 L629.31 172.84 L626.35 172.84 L623.39 172.84Z" fill="#0000a4" stroke="#0000a4" stroke-width="0.35"/>
<path d="M623.39 172.84 L626.35 172.84 L629.31 172.84 L632.27 172.83 L635.23 172.83 L638.19 172.83 L641.15 172.83 L642.77 178.30 L639.79 178.38 L636.81 178.46 L633.82 178.53 L630.84 178.61 L627.85 178.67 L624.86 178.74Z" fill="#003ca4" stroke="#003ca4" stroke-width="0.35"/>
<path d="M624.86 178.74 L627.85 178.67 L630.84 178.61 L633.82 178.53 L636.81 178.46 L639.79 178.38 L642.77 178.30 L645.04 185.96 L642.01 186.08 L638.98 186.19 L635.94 186.30 L632.90 186.40 L629.86 186.50 L626.81 186.59Z" fill="#0077a4" stroke="#0077a4" stroke-width="0.35"/>
<path d="M626.81 186.59 L629.86 186.50 L632.90 186.40 L635.94 186.30 L638.98 186.19 L642.01 186.08 L645.04 185.96 L647.22 193.30 L644.13 193.44 L641.05 193.57 L637.95 193.69 L634.86 193.81 L631.76 193.92 L628.66 194.03Z" fill="#00a495" stroke="#00a495" stroke-width="0.35"/>
<path d="M628.66 194.03 L631.76 193.92 L634.86 193.81 L637.95 193.69 L641.05 193.57 L644.13 193.44 L647.22 193.30 L647.76 195.11 L644.62 195.12 L641.49 195.14 L638.35 195.15 L635.22 195.16 L632.08 195.18 L628.95 195.19Z" fill="#00a459" stroke="#00a459" stroke-width="0.35"/>
<path d="M628.95 195.19 L632.08 195.18 L635.22 195.16 L638.35 195.15 L641.49 195.14 L644.62 195.12 L647.76 195.11 L648.27 199.66 L645.14 199.84 L642.01 200.01 L638.87 200.18 L635.74 200.34 L632.60 200.49 L629.46 200.64Z" fill="#00a258" stroke="#00a258" stroke-width="0.35"/>
<path d="M629.46 200.64 L632.60 200.49 L635.74 200.34 L638.87 200.18 L642.01 200.01 L645.14 199.84 L648.27 199.66 L648.93 205.51 L645.80 205.86 L642.66 206.19 L639.53 206.51 L636.39 206.82 L633.24 207.12 L630.10 207.40Z" fill="#00a21d" stroke="#00a21d" stroke-width="0.35"/>
<path d="M630.10 207.40 L633.24 207.12 L636.39 206.82 L639.53 206.51 L642.66 206.19 L645.80 205.86 L648.93 205.51 L649.62 211.65 L646.47 212.04 L643.33 212.43 L640.17 212.80 L637.02 213.15 L633.86 213.49 L630.70 213.82Z" fill="#1da200" stroke="#1da200" stroke-width="0.35"/>
<path d="M630.70 213.82 L633.86 213.49 L637.02 213.15 L640.17 212.80 L643.33 212.43 L646.47 212.04 L649.62 211.65 L650.33 217.99 L647.17 218.40 L644.00 218.79 L640.83 219.16 L637.66 219.53 L634.48 219.88 L631.30 220.21Z" fill="#58a200" stroke="#58a200" stroke-width="0.35"/>
<path d="M631.30 220.21 L634.48 219.88 L637.66 219.53 L640.83 219.16 L644.00 218.79 L647.17 218.40 L650.33 217.99 L650.75 221.68 L647.59 222.26 L644.43 222.82 L641.26 223.35 L638.09 223.87 L634.90 224.20 L631.68 224.25Z" fill="#93a200" stroke="#93a200" stroke-width="0.35"/>
<path d="M631.68 224.25 L634.90 224.20 L638.09 223.87 L641.26 223.35 L644.43 222.82 L647.59 222.26 L650.75 221.68 L651.00 223.95 L647.78 224.00 L644.56 224.05 L641.34 224.10 L638.12 224.15 L634.90 224.20 L631.68 224.25Z" fill="#a27500" stroke="#a27500" stroke-width="0.35"/>
<path d="M631.68 224.25 L634.90 224.20 L638.12 224.15 L641.34 224.10 L644.56 224.05 L647.78 224.00 L651.00 223.95 L651.00 223.95 L647.78 224.00 L644.56 224.05 L641.34 224.10 L638.12 224.15 L634.92 224.38 L631.73 224.88Z" fill="#93a200" stroke="#93a200" stroke-width="0.35"/>
<path d="M631.73 224.88 L634.92 224.38 L638.12 224.15 L641.34 224.10 L644.56 224.05 L647.78 224.00 L651.00 223.95 L652.32 236.65 L649.15 237.61 L645.98 238.54 L642.79 239.43 L639.60 240.30 L636.40 241.13 L633.20 241.93Z" fill="#a27500" stroke="#a27500" stroke-width="0.35"/>
<path d="M633.20 241.93 L636.40 241.13 L639.60 240.30 L642.79 239.43 L645.98 238.54 L649.15 237.61 L652.32 236.65 L653.96 252.46 L650.81 254.08 L647.55 254.62 L644.24 254.75 L640.94 254.88 L637.64 255.00 L634.33 255.13Z" fill="#a23b00" stroke="#a23b00" stroke-width="0.35"/>
<path d="M634.33 255.13 L637.64 255.00 L640.94 254.88 L644.24 254.75 L647.55 254.62 L650.81 254.08 L653.96 252.46 L654.16 254.37 L650.85 254.50 L647.55 254.62 L644.24 254.75 L640.94 254.88 L637.64 255.00 L634.33 255.13Z" fill="#a20000" stroke="#a20000" stroke-width="0.35"/>
<path d="M634.33 255.13 L637.64 255.00 L640.94 254.88 L644.24 254.75 L647.55 254.62 L650.85 254.50 L654.16 254.37 L654.16 254.37 L650.85 254.50 L647.59 255.51 L644.33 256.84 L641.08 258.15 L637.81 259.42 L634.54 260.66Z" fill="#9d3900" stroke="#9d3900" stroke-width="0.35"/>
<path d="M634.54 260.66 L637.81 259.42 L641.08 258.15 L644.33 256.84 L647.59 255.51 L650.85 254.50 L654.16 254.37 L655.41 280.36 L652.07 280.74 L648.73 281.12 L645.40 281.50 L642.06 281.88 L638.72 282.25 L635.38 282.63Z" fill="#9d0000" stroke="#9d0000" stroke-width="0.35"/>
<path d="M635.38 282.63 L638.72 282.25 L642.06 281.88 L645.40 281.50 L648.73 281.12 L652.07 280.74 L655.41 280.36 L655.27 310.61 L651.94 311.07 L648.60 311.54 L645.27 312.00 L641.94 312.46 L638.60 312.92 L635.27 313.38Z" fill="#9a0000" stroke="#9a0000" stroke-width="0.35"/>
<path d="M635.27 313.38 L638.60 312.92 L641.94 312.46 L645.27 312.00 L648.60 311.54 L651.94 311.07 L655.27 310.61 L652.86 338.23 L649.59 338.82 L646.39 338.48 L643.22 337.80 L640.04 337.18 L636.85 336.59 L633.65 336.05Z" fill="#980000" stroke="#980000" stroke-width="0.35"/>
<path d="M633.65 336.05 L636.85 336.59 L640.04 337.18 L643.22 337.80 L646.39 338.48 L649.59 338.82 L652.86 338.23 L652.86 338.23 L649.59 338.82 L646.32 339.41 L643.05 340.00 L639.78 340.59 L636.51 341.17 L633.24 341.76Z" fill="#983700" stroke="#983700" stroke-width="0.35"/>
<path d="M633.24 341.76 L636.51 341.17 L639.78 340.59 L643.05 340.00 L646.32 339.41 L649.59 338.82 L652.86 338.23 L652.67 340.01 L649.55 339.21 L646.32 339.41 L643.05 340.00 L639.78 340.59 L636.51 341.17 L633.24 341.76Z" fill="#9d0000" stroke="#9d0000" stroke-width="0.35"/>
<path d="M633.24 341.76 L636.51 341.17 L639.78 340.59 L643.05 340.00 L646.32 339.41 L649.55 339.21 L652.67 340.01 L651.07 354.73 L647.94 354.58 L644.79 354.46 L641.64 354.36 L638.48 354.30 L635.31 354.26 L632.14 354.24Z" fill="#9d3900" stroke="#9d3900" stroke-width="0.35"/>
<path d="M632.14 354.24 L635.31 354.26 L638.48 354.30 L641.64 354.36 L644.79 354.46 L647.94 354.58 L651.07 354.73 L649.80 366.54 L646.61 367.28 L643.42 368.01 L640.23 368.75 L637.04 369.48 L633.87 370.05 L630.72 370.35Z" fill="#9d7200" stroke="#9d7200" stroke-width="0.35"/>
<path d="M630.72 370.35 L633.87 370.05 L637.04 369.48 L640.23 368.75 L643.42 368.01 L646.61 367.28 L649.80 366.54 L649.80 366.54 L646.61 367.28 L643.42 368.01 L640.23 368.75 L637.04 369.48 L633.85 370.22 L630.67 370.95Z" fill="#8f9d00" stroke="#8f9d00" stroke-width="0.35"/>
<path d="M630.67 370.95 L633.85 370.22 L637.04 369.48 L640.23 368.75 L643.42 368.01 L646.61 367.28 L649.80 366.54 L649.53 368.62 L646.41 368.87 L643.28 369.15 L640.15 369.44 L637.01 369.74 L633.85 370.22 L630.67 370.95Z" fill="#986e00" stroke="#986e00" stroke-width="0.35"/>
<path d="M630.67 370.95 L633.85 370.22 L637.01 369.74 L640.15 369.44 L643.28 369.15 L646.41 368.87 L649.53 368.62 L649.09 371.98 L645.96 372.41 L642.83 372.86 L639.69 373.31 L636.55 373.77 L633.41 374.24 L630.26 374.73Z" fill="#8a9800" stroke="#8a9800" stroke-width="0.35"/>
<path d="M630.26 374.73 L633.41 374.24 L636.55 373.77 L639.69 373.31 L642.83 372.86 L645.96 372.41 L649.09 371.98 L648.33 377.78 L645.22 378.24 L642.11 378.71 L639.00 379.19 L635.88 379.68 L632.76 380.19 L629.63 380.70Z" fill="#539800" stroke="#539800" stroke-width="0.35"/>
<path d="M629.63 380.70 L632.76 380.19 L635.88 379.68 L639.00 379.19 L642.11 378.71 L645.22 378.24 L648.33 377.78 L647.60 383.38 L644.51 383.91 L641.41 384.45 L638.31 385.00 L635.21 385.56 L632.10 386.13 L628.99 386.70Z" fill="#1b9800" stroke="#1b9800" stroke-width="0.35"/>
<path d="M628.99 386.70 L632.10 386.13 L635.21 385.56 L638.31 385.00 L641.41 384.45 L644.51 383.91 L647.60 383.38 L646.91 388.72 L643.81 389.43 L640.72 390.14 L637.62 390.85 L634.52 391.57 L631.42 392.29 L628.32 393.02Z" fill="#00981b" stroke="#00981b" stroke-width="0.35"/>
<path d="M628.32 393.02 L631.42 392.29 L634.52 391.57 L637.62 390.85 L640.72 390.14 L643.81 389.43 L646.91 388.72 L646.37 392.88 L643.27 393.75 L640.17 394.62 L637.07 395.50 L633.98 396.37 L630.88 397.24 L627.78 398.12Z" fill="#009853" stroke="#009853" stroke-width="0.35"/>
<path d="M627.78 398.12 L630.88 397.24 L633.98 396.37 L637.07 395.50 L640.17 394.62 L643.27 393.75 L646.37 392.88 L645.88 394.44 L642.82 395.21 L639.77 395.98 L636.71 396.76 L633.65 397.54 L630.58 398.32 L627.52 399.11Z" fill="#008448" stroke="#008448" stroke-width="0.35"/>
<path d="M627.52 399.11 L630.58 398.32 L633.65 397.54 L636.71 396.76 L639.77 395.98 L642.82 395.21 L645.88 394.44 L643.90 400.79 L640.89 401.57 L637.89 402.36 L634.88 403.15 L631.87 403.94 L628.85 404.73 L625.84 405.53Z" fill="#008478" stroke="#008478" stroke-width="0.35"/>
<path d="M625.84 405.53 L628.85 404.73 L631.87 403.94 L634.88 403.15 L637.89 402.36 L640.89 401.57 L643.90 400.79 L641.83 407.42 L638.87 408.23 L635.91 409.04 L632.95 409.85 L629.99 410.67 L627.03 411.48 L624.06 412.31Z" fill="#006084" stroke="#006084" stroke-width="0.35"/>
<path d="M624.06 412.31 L627.03 411.48 L629.99 410.67 L632.95 409.85 L635.91 409.04 L638.87 408.23 L641.83 407.42 L640.35 412.15 L637.42 413.03 L634.48 413.90 L631.54 414.77 L628.60 415.65 L625.66 416.52 L622.73 417.39Z" fill="#003084" stroke="#003084" stroke-width="0.35"/>
<path d="M622.73 417.39 L625.66 416.52 L628.60 415.65 L631.54 414.77 L634.48 413.90 L637.42 413.03 L640.35 412.15 L638.94 416.68 L636.04 417.55 L633.14 418.42 L630.24 419.30 L627.34 420.17 L624.44 421.04 L621.54 421.92Z" fill="#000084" stroke="#000084" stroke-width="0.35"/>
<path d="M639.59 167.60 L641.03 167.60 L642.46 167.60 L643.90 167.60 L645.33 167.60 L646.77 167.60 L648.20 167.60 L649.87 172.81 L648.42 172.81 L646.96 172.81 L645.51 172.82 L644.05 172.82 L642.60 172.82 L641.15 172.83Z" fill="#00009d" stroke="#00009d" stroke-width="0.35"/>
<path d="M641.15 172.83 L642.60 172.82 L644.05 172.82 L645.51 172.82 L646.96 172.81 L648.42 172.81 L649.87 172.81 L651.62 178.25 L650.14 178.25 L648.67 178.26 L647.19 178.27 L645.72 178.28 L644.24 178.28 L642.77 178.30Z" fill="#00399d" stroke="#00399d" stroke-width="0.35"/>
<path d="M642.77 178.30 L644.24 178.28 L645.72 178.28 L647.19 178.27 L648.67 178.26 L650.14 178.25 L651.62 178.25 L654.07 185.88 L652.56 185.89 L651.06 185.90 L649.55 185.91 L648.05 185.93 L646.54 185.94 L645.04 185.96Z" fill="#00729d" stroke="#00729d" stroke-width="0.35"/>
<path d="M645.04 185.96 L646.54 185.94 L648.05 185.93 L649.55 185.91 L651.06 185.90 L652.56 185.89 L654.07 185.88 L656.42 193.18 L654.88 193.20 L653.35 193.22 L651.82 193.24 L650.28 193.25 L648.75 193.27 L647.22 193.30Z" fill="#009d8f" stroke="#009d8f" stroke-width="0.35"/>
<path d="M647.22 193.30 L648.75 193.27 L650.28 193.25 L651.82 193.24 L653.35 193.22 L654.88 193.20 L656.42 193.18 L657.00 195.00 L655.46 195.02 L653.92 195.04 L652.38 195.06 L650.84 195.07 L649.30 195.09 L647.76 195.11Z" fill="#009d55" stroke="#009d55" stroke-width="0.35"/>
<path d="M647.76 195.11 L649.30 195.09 L650.84 195.07 L652.38 195.06 L653.92 195.04 L655.46 195.02 L657.00 195.00 L657.55 199.48 L656.00 199.51 L654.46 199.54 L652.91 199.56 L651.36 199.59 L649.81 199.62 L648.27 199.66Z" fill="#009a54" stroke="#009a54" stroke-width="0.35"/>
<path d="M648.27 199.66 L649.81 199.62 L651.36 199.59 L652.91 199.56 L654.46 199.54 L656.00 199.51 L657.55 199.48 L658.26 205.24 L656.70 205.28 L655.15 205.32 L653.59 205.36 L652.03 205.40 L650.48 205.44 L648.93 205.51Z" fill="#009a1c" stroke="#009a1c" stroke-width="0.35"/>
<path d="M648.93 205.51 L650.48 205.44 L652.03 205.40 L653.59 205.36 L655.15 205.32 L656.70 205.28 L658.26 205.24 L659.00 211.30 L657.44 211.35 L655.87 211.40 L654.31 211.46 L652.74 211.51 L651.18 211.56 L649.62 211.65Z" fill="#1c9a00" stroke="#1c9a00" stroke-width="0.35"/>
<path d="M649.62 211.65 L651.18 211.56 L652.74 211.51 L654.31 211.46 L655.87 211.40 L657.44 211.35 L659.00 211.30 L659.77 217.57 L658.20 217.64 L656.62 217.70 L655.05 217.76 L653.48 217.83 L651.90 217.89 L650.33 217.99Z" fill="#549a00" stroke="#549a00" stroke-width="0.35"/>
<path d="M650.33 217.99 L651.90 217.89 L653.48 217.83 L655.05 217.76 L656.62 217.70 L658.20 217.64 L659.77 217.57 L660.22 221.20 L658.64 221.27 L657.06 221.34 L655.48 221.41 L653.90 221.48 L652.32 221.55 L650.75 221.68Z" fill="#8c9a00" stroke="#8c9a00" stroke-width="0.35"/>
<path d="M650.75 221.68 L652.32 221.55 L653.90 221.48 L655.48 221.41 L657.06 221.34 L658.64 221.27 L660.22 221.20 L660.50 223.50 L658.92 223.57 L657.33 223.65 L655.75 223.72 L654.17 223.80 L652.59 223.87 L651.00 223.95Z" fill="#9a7000" stroke="#9a7000" stroke-width="0.35"/>
<path d="M651.00 223.95 L652.59 223.87 L654.17 223.80 L655.75 223.72 L657.33 223.65 L658.92 223.57 L660.50 223.50 L661.91 235.83 L660.31 235.95 L658.71 236.07 L657.11 236.19 L655.51 236.31 L653.91 236.44 L652.32 236.65Z" fill="#9a7000" stroke="#9a7000" stroke-width="0.35"/>
<path d="M652.32 236.65 L653.91 236.44 L655.51 236.31 L657.11 236.19 L658.71 236.07 L660.31 235.95 L661.91 235.83 L663.67 251.23 L662.05 251.41 L660.43 251.59 L658.81 251.77 L657.18 251.95 L655.56 252.13 L653.96 252.46Z" fill="#9a3800" stroke="#9a3800" stroke-width="0.35"/>
<path d="M653.96 252.46 L655.56 252.13 L657.18 251.95 L658.81 251.77 L660.43 251.59 L662.05 251.41 L663.67 251.23 L663.90 253.25 L662.28 253.44 L660.65 253.62 L659.03 253.81 L657.40 254.00 L655.78 254.18 L654.16 254.37Z" fill="#9a0000" stroke="#9a0000" stroke-width="0.35"/>
<path d="M654.16 254.37 L655.78 254.18 L657.40 254.00 L659.03 253.81 L660.65 253.62 L662.28 253.44 L663.90 253.25 L665.25 277.00 L663.61 277.56 L661.97 278.12 L660.33 278.68 L658.69 279.24 L657.05 279.80 L655.41 280.36Z" fill="#930000" stroke="#930000" stroke-width="0.35"/>
<path d="M655.41 280.36 L657.05 279.80 L658.69 279.24 L660.33 278.68 L661.97 278.12 L663.61 277.56 L665.25 277.00 L665.10 306.50 L663.46 307.19 L661.82 307.87 L660.18 308.56 L658.55 309.24 L656.91 309.93 L655.27 310.61Z" fill="#930000" stroke="#930000" stroke-width="0.35"/>
<path d="M655.27 310.61 L656.91 309.93 L658.55 309.24 L660.18 308.56 L661.82 307.87 L663.46 307.19 L665.10 306.50 L662.50 333.00 L660.89 333.87 L659.29 334.74 L657.68 335.62 L656.07 336.49 L654.46 337.36 L652.86 338.23Z" fill="#930000" stroke="#930000" stroke-width="0.35"/>
<path d="M652.86 338.23 L654.46 337.36 L656.07 336.49 L657.68 335.62 L659.29 334.74 L660.89 333.87 L662.50 333.00 L662.28 334.83 L660.67 335.72 L659.07 336.61 L657.46 337.49 L655.86 338.38 L654.25 339.27 L652.67 340.01Z" fill="#930000" stroke="#930000" stroke-width="0.35"/>
<path d="M652.67 340.01 L654.25 339.27 L655.86 338.38 L657.46 337.49 L659.07 336.61 L660.67 335.72 L662.28 334.83 L660.57 348.81 L658.98 349.81 L657.40 350.81 L655.82 351.81 L654.23 352.81 L652.65 353.81 L651.07 354.73Z" fill="#933600" stroke="#933600" stroke-width="0.35"/>
<path d="M651.07 354.73 L652.65 353.81 L654.23 352.81 L655.82 351.81 L657.40 350.81 L658.98 349.81 L660.57 348.81 L659.20 360.00 L657.63 361.09 L656.07 362.18 L654.50 363.27 L652.93 364.36 L651.36 365.45 L649.80 366.54Z" fill="#936b00" stroke="#936b00" stroke-width="0.35"/>
<path d="M649.80 366.54 L651.36 365.45 L652.93 364.36 L654.50 363.27 L656.07 362.18 L657.63 361.09 L659.20 360.00 L658.90 362.03 L657.34 363.13 L655.77 364.24 L654.21 365.35 L652.65 366.45 L651.08 367.56 L649.53 368.62Z" fill="#8e6700" stroke="#8e6700" stroke-width="0.35"/>
<path d="M649.53 368.62 L651.08 367.56 L652.65 366.45 L654.21 365.35 L655.77 364.24 L657.34 363.13 L658.90 362.03 L658.43 365.22 L656.87 366.35 L655.31 367.49 L653.76 368.62 L652.20 369.75 L650.64 370.89 L649.09 371.98Z" fill="#818e00" stroke="#818e00" stroke-width="0.35"/>
<path d="M649.09 371.98 L650.64 370.89 L652.20 369.75 L653.76 368.62 L655.31 367.49 L656.87 366.35 L658.43 365.22 L657.62 370.74 L656.07 371.92 L654.52 373.10 L652.97 374.28 L651.42 375.46 L649.88 376.63 L648.33 377.78Z" fill="#4d8e00" stroke="#4d8e00" stroke-width="0.35"/>
<path d="M648.33 377.78 L649.88 376.63 L651.42 375.46 L652.97 374.28 L654.52 373.10 L656.07 371.92 L657.62 370.74 L656.83 376.08 L655.29 377.30 L653.75 378.52 L652.21 379.75 L650.68 380.97 L649.14 382.19 L647.60 383.38Z" fill="#1a8e00" stroke="#1a8e00" stroke-width="0.35"/>
<path d="M647.60 383.38 L649.14 382.19 L650.68 380.97 L652.21 379.75 L653.75 378.52 L655.29 377.30 L656.83 376.08 L656.08 381.15 L654.55 382.42 L653.02 383.68 L651.49 384.95 L649.96 386.21 L648.43 387.47 L646.91 388.72Z" fill="#008e1a" stroke="#008e1a" stroke-width="0.35"/>
<path d="M646.91 388.72 L648.43 387.47 L649.96 386.21 L651.49 384.95 L653.02 383.68 L654.55 382.42 L656.08 381.15 L655.50 385.10 L653.98 386.40 L652.46 387.69 L650.93 388.99 L649.41 390.28 L647.89 391.58 L646.37 392.88Z" fill="#008e4d" stroke="#008e4d" stroke-width="0.35"/>
<path d="M646.37 392.88 L647.89 391.58 L649.41 390.28 L650.93 388.99 L652.46 387.69 L653.98 386.40 L655.50 385.10 L654.97 386.68 L653.45 387.97 L651.94 389.27 L650.42 390.56 L648.91 391.86 L647.39 393.16 L645.88 394.44Z" fill="#007a43" stroke="#007a43" stroke-width="0.35"/>
<path d="M645.88 394.44 L647.39 393.16 L648.91 391.86 L650.42 390.56 L651.94 389.27 L653.45 387.97 L654.97 386.68 L652.84 393.02 L651.35 394.32 L649.86 395.62 L648.37 396.91 L646.88 398.21 L645.38 399.50 L643.90 400.79Z" fill="#007a6f" stroke="#007a6f" stroke-width="0.35"/>
<path d="M643.90 400.79 L645.38 399.50 L646.88 398.21 L648.37 396.91 L649.86 395.62 L651.35 394.32 L652.84 393.02 L650.61 399.65 L649.15 400.95 L647.68 402.24 L646.22 403.54 L644.76 404.84 L643.29 406.13 L641.83 407.42Z" fill="#00597a" stroke="#00597a" stroke-width="0.35"/>
<path d="M641.83 407.42 L643.29 406.13 L644.76 404.84 L646.22 403.54 L647.68 402.24 L649.15 400.95 L650.61 399.65 L649.02 404.38 L647.58 405.67 L646.13 406.97 L644.69 408.27 L643.24 409.56 L641.80 410.86 L640.35 412.15Z" fill="#002d7a" stroke="#002d7a" stroke-width="0.35"/>
<path d="M640.35 412.15 L641.80 410.86 L643.24 409.56 L644.69 408.27 L646.13 406.97 L647.58 405.67 L649.02 404.38 L647.50 408.90 L646.07 410.20 L644.65 411.49 L643.22 412.79 L641.80 414.08 L640.37 415.38 L638.94 416.68Z" fill="#00007a" stroke="#00007a" stroke-width="0.35"/>
<path d="M410.80 167.60 L421.01 167.60 L440.59 167.60 L466.51 167.60 L497.50 167.60 L531.99 167.60 L566.50 167.60 L597.60 167.60 L622.09 167.60 L639.59 167.60 L648.20 167.60 M402.00 195.00 L412.96 195.12 L434.00 195.20 L461.84 195.25 L495.13 195.29 L532.18 195.30 L569.24 195.29 L602.65 195.25 L628.95 195.19 L647.76 195.11 L657.00 195.00 M398.50 223.50 L409.77 223.99 L431.38 224.30 L459.98 224.52 L494.18 224.66 L532.25 224.70 L570.33 224.64 L604.65 224.48 L631.68 224.25 L651.00 223.95 L660.50 223.50 M395.10 253.25 L406.66 254.47 L428.83 255.24 L458.17 255.79 L493.27 256.14 L532.32 256.25 L571.39 256.10 L606.61 255.71 L634.33 255.13 L654.16 254.37 L663.90 253.25 M393.75 277.00 L405.42 280.65 L427.82 282.96 L457.46 284.63 L492.90 285.67 L532.35 286.00 L571.81 285.55 L607.38 284.37 L635.38 282.63 L655.41 280.36 L665.25 277.00 M393.90 306.50 L405.56 310.96 L427.94 313.79 L457.54 315.82 L492.94 317.09 L532.35 317.50 L571.77 316.95 L607.29 315.51 L635.27 313.38 L655.27 310.61 L665.10 306.50 M396.50 333.00 L407.94 338.68 L429.88 342.28 L458.92 344.87 L493.64 346.48 L532.29 347.00 L570.96 346.30 L605.80 344.47 L633.24 341.76 L652.86 338.23 L662.50 333.00 M399.80 360.00 L410.95 367.10 L432.35 371.59 L460.67 374.83 L494.53 376.85 L532.22 377.50 L569.93 376.63 L603.91 374.33 L630.67 370.95 L649.80 366.54 L659.20 360.00 M403.50 385.10 L414.34 393.54 L435.13 398.88 L462.63 402.73 L495.53 405.13 L532.15 405.90 L568.77 404.86 L601.79 402.14 L627.78 398.12 L646.37 392.88 L655.50 385.10 M421.65 417.34 L441.12 422.68 L466.88 426.53 L497.69 428.93 L531.98 429.70 L566.28 428.66 L597.20 425.94 L621.54 421.92 L638.94 416.68 M421.01 167.60 L412.96 195.12 L409.77 223.99 L406.66 254.47 L405.42 280.65 L405.56 310.96 L407.94 338.68 L410.95 367.10 L414.34 393.54 L421.65 417.34 M440.59 167.60 L434.00 195.20 L431.38 224.30 L428.83 255.24 L427.82 282.96 L427.94 313.79 L429.88 342.28 L432.35 371.59 L435.13 398.88 L441.12 422.68 M466.51 167.60 L461.84 195.25 L459.98 224.52 L458.17 255.79 L457.46 284.63 L457.54 315.82 L458.92 344.87 L460.67 374.83 L462.63 402.73 L466.88 426.53 M497.50 167.60 L495.13 195.29 L494.18 224.66 L493.27 256.14 L492.90 285.67 L492.94 317.09 L493.64 346.48 L494.53 376.85 L495.53 405.13 L497.69 428.93 M531.99 167.60 L532.18 195.30 L532.25 224.70 L532.32 256.25 L532.35 286.00 L532.35 317.50 L532.29 347.00 L532.22 377.50 L532.15 405.90 L531.98 429.70 M566.50 167.60 L569.24 195.29 L570.33 224.64 L571.39 256.10 L571.81 285.55 L571.77 316.95 L570.96 346.30 L569.93 376.63 L568.77 404.86 L566.28 428.66 M597.60 167.60 L602.65 195.25 L604.65 224.48 L606.61 255.71 L607.38 284.37 L607.29 315.51 L605.80 344.47 L603.91 374.33 L601.79 402.14 L597.20 425.94 M622.09 167.60 L628.95 195.19 L631.68 224.25 L634.33 255.13 L635.38 282.63 L635.27 313.38 L633.24 341.76 L630.67 370.95 L627.78 398.12 L621.54 421.92 M639.59 167.60 L647.76 195.11 L651.00 223.95 L654.16 254.37 L655.41 280.36 L655.27 310.61 L652.86 338.23 L649.80 366.54 L646.37 392.88 L638.94 416.68" fill="none" stroke="#101010" stroke-width="0.9" stroke-linejoin="round"/>
<text x="120.3" y="496.3" font-size="15.5" fill="#fff" stroke="#fff" stroke-width="0.7" font-weight="bold" textLength="10" lengthAdjust="spacingAndGlyphs">Z</text>
<text x="160.8" y="537.2" font-size="15.5" fill="#fff" stroke="#fff" stroke-width="0.7" font-weight="bold" textLength="11.5" lengthAdjust="spacingAndGlyphs">X</text>
<text x="119" y="531" font-size="11" fill="#e8ecf4" font-weight="bold" textLength="10" lengthAdjust="spacingAndGlyphs">Y</text>
<path d="M125.5 533 V514" stroke="#0000d8" stroke-width="3"/>
<path d="M120.8 515.5 L125.5 506 L130.2 515.5Z" fill="#0000d8"/>
<circle cx="125.3" cy="532.5" r="3.3" fill="#10c010"/>
<path d="M125.5 533 H144" stroke="#c00000" stroke-width="3.2"/>
<path d="M143 528.2 L152.3 533 L143 537.8Z" fill="#a00000"/>
<text x="180.5" y="514.5" fill="#f4f4f4" font-size="14.6" textLength="119.6" lengthAdjust="spacingAndGlyphs">ODB: Job-1.odb</text>
<text x="320.5" y="514.5" fill="#f4f4f4" font-size="14.6" textLength="155.5" lengthAdjust="spacingAndGlyphs">Abaqus/Explicit 2024</text>
<text x="497.5" y="514.5" fill="#f4f4f4" font-size="14.6" textLength="379.7" lengthAdjust="spacingAndGlyphs">Mon Nov 17 20:33:35 Eastern Standard Time 2025</text>
<text x="180.5" y="535.5" fill="#f4f4f4" font-size="14.6" textLength="95" lengthAdjust="spacingAndGlyphs">Step: Step-1</text>
<text x="180.5" y="551.3" fill="#f4f4f4" font-size="14.6" textLength="76" lengthAdjust="spacingAndGlyphs">Increment</text>
<text x="277" y="551.3" fill="#f4f4f4" font-size="14.6" textLength="159" lengthAdjust="spacingAndGlyphs">144622: Step Time =</text>
<text x="457" y="551.3" fill="#f4f4f4" font-size="14.6" textLength="39" lengthAdjust="spacingAndGlyphs">1.000</text>
<text x="180.5" y="567" fill="#f4f4f4" font-size="14.6" textLength="270.5" lengthAdjust="spacingAndGlyphs">Primary Var: S, Max. Principal (Abs)</text>
</svg>
</body></html>
